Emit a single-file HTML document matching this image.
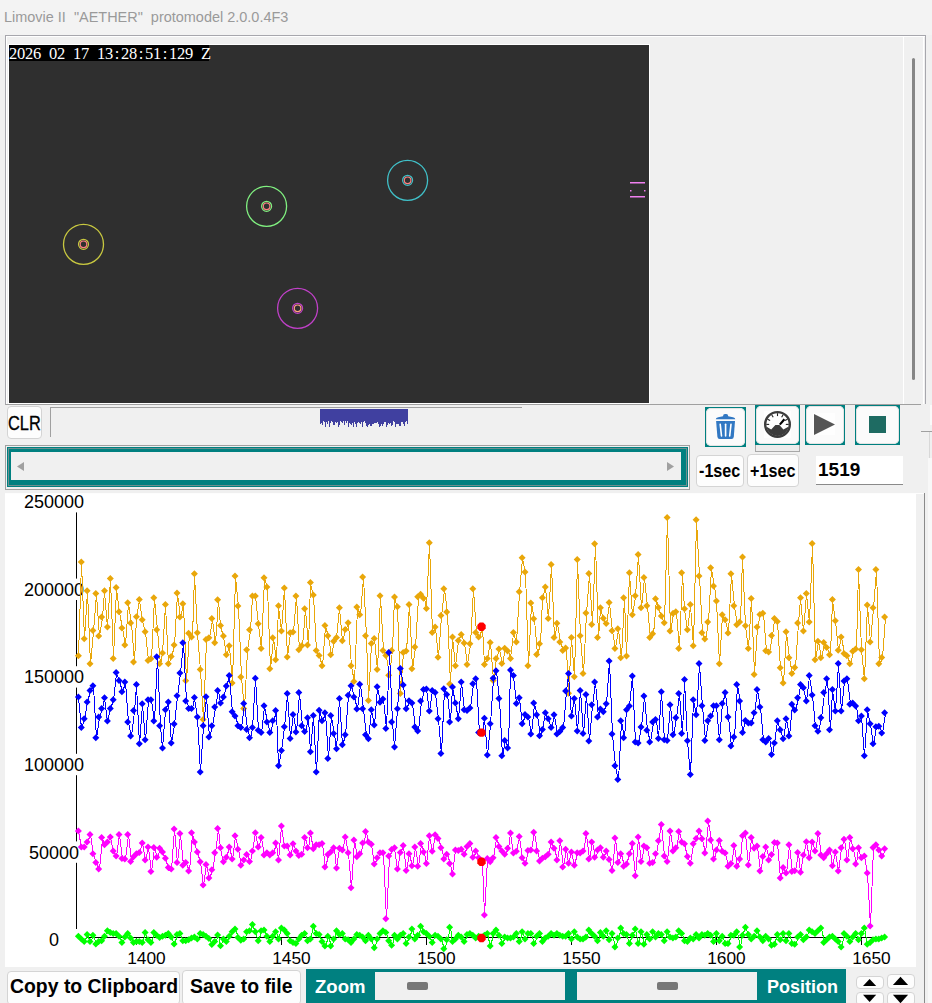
<!DOCTYPE html><html><head><meta charset="utf-8"><style>
*{margin:0;padding:0;box-sizing:border-box}
html,body{width:932px;height:1003px;overflow:hidden;background:#f0f0f0;font-family:"Liberation Sans",sans-serif;position:relative}
.a{position:absolute}
.title{left:0;top:0;width:932px;height:35px;background:#f3f3f3}
.ttext{left:4px;top:8px;font-size:15px;color:#9a9a9a;white-space:pre;transform:scaleX(0.964);transform-origin:0 0}
.btn{background:#fdfdfd;border:1px solid #d4d4d4;border-radius:4px}
.tbtn{background:#008080}
.tbtn>div{position:absolute;left:1px;top:1px;right:1px;bottom:1px;background:#fbfbfb;border-radius:5px;box-shadow:inset 0 0 0 1px #e4e4e4}
.bold{font-weight:bold;color:#000;white-space:pre}
</style></head><body><div class="a title"></div>
<div class="a ttext">Limovie II  "AETHER"  protomodel 2.0.0.4F3</div>
<div class="a" style="left:5px;top:35px;width:921px;height:370px;border:1px solid #a7a7ad;border-bottom-color:#a0a0a0"></div>
<div class="a" style="left:6px;top:36px;width:919px;height:1px;background:#fff"></div>
<div class="a" style="left:6px;top:36px;width:1px;height:368px;background:#fff"></div>
<div class="a" style="left:923px;top:36px;width:1px;height:368px;background:#fff"></div>
<div class="a" style="left:903px;top:37px;width:1px;height:367px;background:#fff"></div>
<div class="a" style="left:912px;top:58px;width:3px;height:322px;background:#868686;border-radius:2px"></div>
<div class="a" style="left:8px;top:44px;width:642px;height:360px;background:#fff"></div>
<div class="a" style="left:9px;top:45px;width:640px;height:358px;background:#2f2f2f"></div>
<div class="a" style="left:9px;top:45px;width:200px;height:16px;background:#000"></div>
<div class="a" style="left:9px;top:46px;height:16px;font-family:'Liberation Serif',serif;font-size:16.5px;line-height:16px;color:#fff;white-space:pre;display:flex"><span style="display:inline-block;width:8px;text-align:center">2</span><span style="display:inline-block;width:8px;text-align:center">0</span><span style="display:inline-block;width:8px;text-align:center">2</span><span style="display:inline-block;width:8px;text-align:center">6</span><span style="display:inline-block;width:8px;text-align:center"> </span><span style="display:inline-block;width:8px;text-align:center">0</span><span style="display:inline-block;width:8px;text-align:center">2</span><span style="display:inline-block;width:8px;text-align:center"> </span><span style="display:inline-block;width:8px;text-align:center">1</span><span style="display:inline-block;width:8px;text-align:center">7</span><span style="display:inline-block;width:8px;text-align:center"> </span><span style="display:inline-block;width:8px;text-align:center">1</span><span style="display:inline-block;width:8px;text-align:center">3</span><span style="display:inline-block;width:8px;text-align:center">:</span><span style="display:inline-block;width:8px;text-align:center">2</span><span style="display:inline-block;width:8px;text-align:center">8</span><span style="display:inline-block;width:8px;text-align:center">:</span><span style="display:inline-block;width:8px;text-align:center">5</span><span style="display:inline-block;width:8px;text-align:center">1</span><span style="display:inline-block;width:8px;text-align:center">:</span><span style="display:inline-block;width:8px;text-align:center">1</span><span style="display:inline-block;width:8px;text-align:center">2</span><span style="display:inline-block;width:8px;text-align:center">9</span><span style="display:inline-block;width:8px;text-align:center"> </span><span style="display:inline-block;width:8px;text-align:center">Z</span></div>
<svg class="a" style="left:0;top:0" width="932" height="410"><circle cx="83.5" cy="244.3" r="20" fill="none" stroke="#c8c840" stroke-width="1.3"/><circle cx="83.5" cy="244.3" r="5" fill="none" stroke="#c8c840" stroke-width="1.2"/><circle cx="83.5" cy="244.3" r="3.3" fill="none" stroke="#ff8080" stroke-width="1.2"/><circle cx="266.6" cy="206.3" r="20" fill="none" stroke="#80f080" stroke-width="1.3"/><circle cx="266.6" cy="206.3" r="5" fill="none" stroke="#80f080" stroke-width="1.2"/><circle cx="266.6" cy="206.3" r="3.3" fill="none" stroke="#ff8080" stroke-width="1.2"/><circle cx="407.6" cy="180.3" r="20" fill="none" stroke="#40c0c8" stroke-width="1.3"/><circle cx="407.6" cy="180.3" r="5" fill="none" stroke="#40c0c8" stroke-width="1.2"/><circle cx="407.6" cy="180.3" r="3.3" fill="none" stroke="#ff8080" stroke-width="1.2"/><circle cx="297.6" cy="308.3" r="20" fill="none" stroke="#c040c8" stroke-width="1.3"/><circle cx="297.6" cy="308.3" r="5" fill="none" stroke="#c040c8" stroke-width="1.2"/><circle cx="297.6" cy="308.3" r="3.3" fill="none" stroke="#ffa080" stroke-width="1.2"/><rect x="630" y="182" width="15" height="1.5" fill="#f080f0"/><rect x="630" y="196" width="15" height="1.5" fill="#f080f0"/><rect x="630" y="190" width="1.5" height="1.5" fill="#f080f0"/><rect x="644" y="190" width="1.5" height="1.5" fill="#f080f0"/></svg>
<div class="a" style="left:921px;top:404px;width:11px;height:28px;background:#f0f0f0;border-bottom:1px solid #a0a0a0"></div>
<div class="a" style="left:930px;top:405px;width:2px;height:20px;background:#fafafa"></div>
<div class="a" style="left:929px;top:432px;width:1px;height:26px;background:#d8d8d8"></div>
<div class="a btn" style="left:6.5px;top:406px;width:35.5px;height:33px"></div>
<div class="a" style="left:8px;top:412px;font-size:19.5px;line-height:22px;color:#000;-webkit-text-stroke:0.3px #000;transform:scaleX(0.84);transform-origin:0 0">CLR</div>
<div class="a" style="left:50px;top:407px;width:1px;height:30px;background:#a0a0a0"></div>
<div class="a" style="left:50px;top:407px;width:472px;height:1px;background:#a0a0a0"></div>
<div class="a" style="left:320px;top:409px;width:88px;height:11px;background:#4040a0"></div>
<svg class="a" style="left:0;top:0" width="932" height="440"><rect x="320" y="420" width="1" height="4" fill="#4040a0"/><rect x="321" y="420" width="1" height="3" fill="#4040a0"/><rect x="322" y="420" width="1" height="5" fill="#4040a0"/><rect x="323" y="420" width="1" height="1" fill="#4040a0"/><rect x="324" y="420" width="1" height="2" fill="#4040a0"/><rect x="325" y="420" width="1" height="7" fill="#4040a0"/><rect x="326" y="420" width="1" height="2" fill="#4040a0"/><rect x="327" y="420" width="1" height="4" fill="#4040a0"/><rect x="328" y="420" width="1" height="1" fill="#4040a0"/><rect x="329" y="420" width="1" height="7" fill="#4040a0"/><rect x="330" y="420" width="1" height="3" fill="#4040a0"/><rect x="331" y="420" width="1" height="1" fill="#4040a0"/><rect x="332" y="420" width="1" height="2" fill="#4040a0"/><rect x="333" y="420" width="1" height="5" fill="#4040a0"/><rect x="334" y="420" width="1" height="5" fill="#4040a0"/><rect x="335" y="420" width="1" height="2" fill="#4040a0"/><rect x="336" y="420" width="1" height="3" fill="#4040a0"/><rect x="337" y="420" width="1" height="2" fill="#4040a0"/><rect x="338" y="420" width="1" height="7" fill="#4040a0"/><rect x="339" y="420" width="1" height="5" fill="#4040a0"/><rect x="340" y="420" width="1" height="1" fill="#4040a0"/><rect x="341" y="420" width="1" height="2" fill="#4040a0"/><rect x="342" y="420" width="1" height="3" fill="#4040a0"/><rect x="343" y="420" width="1" height="1" fill="#4040a0"/><rect x="344" y="420" width="1" height="5" fill="#4040a0"/><rect x="345" y="420" width="1" height="1" fill="#4040a0"/><rect x="346" y="420" width="1" height="3" fill="#4040a0"/><rect x="347" y="420" width="1" height="1" fill="#4040a0"/><rect x="348" y="420" width="1" height="7" fill="#4040a0"/><rect x="349" y="420" width="1" height="3" fill="#4040a0"/><rect x="350" y="420" width="1" height="4" fill="#4040a0"/><rect x="351" y="420" width="1" height="5" fill="#4040a0"/><rect x="352" y="420" width="1" height="3" fill="#4040a0"/><rect x="353" y="420" width="1" height="7" fill="#4040a0"/><rect x="354" y="420" width="1" height="2" fill="#4040a0"/><rect x="355" y="420" width="1" height="4" fill="#4040a0"/><rect x="356" y="420" width="1" height="7" fill="#4040a0"/><rect x="357" y="420" width="1" height="3" fill="#4040a0"/><rect x="358" y="420" width="1" height="2" fill="#4040a0"/><rect x="359" y="420" width="1" height="3" fill="#4040a0"/><rect x="360" y="420" width="1" height="4" fill="#4040a0"/><rect x="361" y="420" width="1" height="2" fill="#4040a0"/><rect x="362" y="420" width="1" height="7" fill="#4040a0"/><rect x="363" y="420" width="1" height="2" fill="#4040a0"/><rect x="364" y="420" width="1" height="1" fill="#4040a0"/><rect x="365" y="420" width="1" height="3" fill="#4040a0"/><rect x="366" y="420" width="1" height="6" fill="#4040a0"/><rect x="367" y="420" width="1" height="7" fill="#4040a0"/><rect x="368" y="420" width="1" height="5" fill="#4040a0"/><rect x="369" y="420" width="1" height="4" fill="#4040a0"/><rect x="370" y="420" width="1" height="6" fill="#4040a0"/><rect x="371" y="420" width="1" height="6" fill="#4040a0"/><rect x="372" y="420" width="1" height="4" fill="#4040a0"/><rect x="373" y="420" width="1" height="4" fill="#4040a0"/><rect x="374" y="420" width="1" height="3" fill="#4040a0"/><rect x="375" y="420" width="1" height="3" fill="#4040a0"/><rect x="376" y="420" width="1" height="3" fill="#4040a0"/><rect x="377" y="420" width="1" height="2" fill="#4040a0"/><rect x="378" y="420" width="1" height="4" fill="#4040a0"/><rect x="379" y="420" width="1" height="7" fill="#4040a0"/><rect x="380" y="420" width="1" height="6" fill="#4040a0"/><rect x="381" y="420" width="1" height="4" fill="#4040a0"/><rect x="382" y="420" width="1" height="6" fill="#4040a0"/><rect x="383" y="420" width="1" height="4" fill="#4040a0"/><rect x="384" y="420" width="1" height="2" fill="#4040a0"/><rect x="385" y="420" width="1" height="2" fill="#4040a0"/><rect x="386" y="420" width="1" height="7" fill="#4040a0"/><rect x="387" y="420" width="1" height="5" fill="#4040a0"/><rect x="388" y="420" width="1" height="3" fill="#4040a0"/><rect x="389" y="420" width="1" height="4" fill="#4040a0"/><rect x="390" y="420" width="1" height="3" fill="#4040a0"/><rect x="391" y="420" width="1" height="6" fill="#4040a0"/><rect x="392" y="420" width="1" height="5" fill="#4040a0"/><rect x="393" y="420" width="1" height="1" fill="#4040a0"/><rect x="394" y="420" width="1" height="2" fill="#4040a0"/><rect x="395" y="420" width="1" height="7" fill="#4040a0"/><rect x="396" y="420" width="1" height="4" fill="#4040a0"/><rect x="397" y="420" width="1" height="4" fill="#4040a0"/><rect x="398" y="420" width="1" height="4" fill="#4040a0"/><rect x="399" y="420" width="1" height="6" fill="#4040a0"/><rect x="400" y="420" width="1" height="6" fill="#4040a0"/><rect x="401" y="420" width="1" height="2" fill="#4040a0"/><rect x="402" y="420" width="1" height="2" fill="#4040a0"/><rect x="403" y="420" width="1" height="4" fill="#4040a0"/><rect x="404" y="420" width="1" height="6" fill="#4040a0"/><rect x="405" y="420" width="1" height="2" fill="#4040a0"/><rect x="406" y="420" width="1" height="1" fill="#4040a0"/><rect x="407" y="420" width="1" height="4" fill="#4040a0"/></svg>
<div class="a tbtn" style="left:705px;top:407px;width:41px;height:40px"><div></div></div>
<div class="a tbtn" style="left:755px;top:405px;width:45px;height:40px"><div></div></div>
<div class="a tbtn" style="left:805px;top:405px;width:40px;height:40px"><div></div></div>
<div class="a tbtn" style="left:855px;top:405px;width:45px;height:40px"><div></div></div>
<div class="a" style="left:755px;top:445px;width:45px;height:7px;border:1px solid #a8a8a8;border-top:none;background:#ececec"></div>
<svg class="a" style="left:0;top:0" width="932" height="460"><path d="M723 416.3 Q723 414 725 414 L726.2 414 Q728.2 414 728.2 416.3 L733 417.3 Q735.3 417.8 735.3 419.2 L715.8 419.2 Q715.8 417.8 718.2 417.3 Z" fill="#3278c3"/><path d="M716.1 421 L735 421 L733.8 436.8 Q733.6 439 731.5 439 L719.6 439 Q717.6 439 717.4 436.8 Z" fill="#3278c3"/><line x1="720.2" y1="424.2" x2="721.5" y2="436" stroke="#fff" stroke-width="1.6" stroke-linecap="round"/><line x1="725.6" y1="424.2" x2="725.6" y2="436" stroke="#fff" stroke-width="1.6" stroke-linecap="round"/><line x1="731.0" y1="424.2" x2="729.7" y2="436" stroke="#fff" stroke-width="1.6" stroke-linecap="round"/><rect x="764" y="411" width="27" height="27" fill="#fff"/><circle cx="777.5" cy="424.4" r="12.3" fill="#fff" stroke="#3c3c3c" stroke-width="2.4"/><path d="M766.2 426.6 L771.2 429.6 L775.4 425.1 L779.4 425.1 L783.4 429.6 L788.8 426.6 A11.5 11.5 0 0 1 766.2 426.6 Z" fill="#3c3c3c"/><path d="M766.3 426 A 11.4 11.4 0 1 1 788.7 426" fill="none" stroke="#3c3c3c" stroke-width="0"/><line x1="779.8" y1="424.6" x2="784.4" y2="419.3" stroke="#000" stroke-width="2.2"/><line x1="766.3" y1="424.4" x2="769.2" y2="424.4" stroke="#222" stroke-width="1.1"/><line x1="767.5" y1="419.3" x2="770.1" y2="420.6" stroke="#222" stroke-width="1.1"/><line x1="771.7" y1="414.8" x2="773.2" y2="417.3" stroke="#222" stroke-width="1.1"/><line x1="777.5" y1="413.2" x2="777.5" y2="416.1" stroke="#222" stroke-width="1.1"/><line x1="783.1" y1="414.7" x2="781.6" y2="417.2" stroke="#222" stroke-width="1.1"/><line x1="787.5" y1="419.3" x2="784.9" y2="420.6" stroke="#222" stroke-width="1.1"/><line x1="788.7" y1="424.4" x2="785.8" y2="424.4" stroke="#222" stroke-width="1.1"/><rect x="813" y="413" width="22" height="22" fill="#fefefe"/><path d="M814 414 L835 424.5 L814 435 Z" fill="#555"/><rect x="869" y="416" width="17" height="17" fill="#1e6b62"/></svg>
<div class="a" style="left:5px;top:445px;width:685px;height:45px;border:1px solid #a0a0a0;background:#f0f0f0"></div>
<div class="a" style="left:7px;top:447px;width:681px;height:40px;background:#008080"></div>
<div class="a" style="left:8px;top:448px;width:679px;height:38px;border:1px solid #6f8f8f"></div>
<div class="a" style="left:11px;top:452px;width:670px;height:28px;background:#f0f0f0"></div>
<svg class="a" style="left:0;top:0" width="700" height="490"><path d="M17 466.5 L24 462 L24 471 Z" fill="#a0a0a0"/><path d="M674 466.5 L667 462 L667 471 Z" fill="#a0a0a0"/></svg>
<div class="a btn" style="left:696px;top:455px;width:48px;height:32px"></div>
<div class="a btn" style="left:747px;top:454px;width:52px;height:33px"></div>
<div class="a bold" style="left:699px;top:459px;font-size:19px;line-height:24px;transform:scaleX(0.85);transform-origin:0 0">-1sec</div>
<div class="a bold" style="left:750px;top:459px;font-size:19px;line-height:24px;transform:scaleX(0.85);transform-origin:0 0">+1sec</div>
<div class="a" style="left:816px;top:456px;width:87px;height:29px;background:#fff;border-bottom:1px solid #8a8a8a"></div>
<div class="a bold" style="left:818px;top:458px;font-size:19px;line-height:24px">1519</div>
<div class="a" style="left:5px;top:494px;width:911px;height:473px;background:#fff"></div>
<div class="a" style="left:5px;top:493px;width:919px;height:1px;background:#fdfdfd"></div>
<div class="a" style="left:924px;top:493px;width:1px;height:510px;background:#8a8a8a"></div>
<div class="a" style="left:928px;top:458px;width:4px;height:545px;background:#f8f8f8"></div>
<svg class="a" style="left:0;top:0" width="932" height="970"><g font-family="Liberation Sans"><line x1="76.5" y1="512" x2="76.5" y2="938" stroke="#000" stroke-width="1"/><line x1="68" y1="937.5" x2="879" y2="937.5" stroke="#000" stroke-width="1"/><line x1="136.5" y1="938" x2="136.5" y2="945" stroke="#000" stroke-width="1"/><text x="146.4" y="963.5" text-anchor="middle" font-size="17.3" fill="#000">1400</text><line x1="281.5" y1="938" x2="281.5" y2="945" stroke="#000" stroke-width="1"/><text x="291.4" y="963.5" text-anchor="middle" font-size="17.3" fill="#000">1450</text><line x1="426.5" y1="938" x2="426.5" y2="945" stroke="#000" stroke-width="1"/><text x="436.4" y="963.5" text-anchor="middle" font-size="17.3" fill="#000">1500</text><line x1="571.5" y1="938" x2="571.5" y2="945" stroke="#000" stroke-width="1"/><text x="581.4" y="963.5" text-anchor="middle" font-size="17.3" fill="#000">1550</text><line x1="716.5" y1="938" x2="716.5" y2="945" stroke="#000" stroke-width="1"/><text x="726.4" y="963.5" text-anchor="middle" font-size="17.3" fill="#000">1600</text><line x1="861.5" y1="938" x2="861.5" y2="945" stroke="#000" stroke-width="1"/><text x="871.4" y="963.5" text-anchor="middle" font-size="17.3" fill="#000">1650</text><rect x="20" y="929.0" width="66" height="21.4" fill="#fff"/><text x="54" y="946.1" text-anchor="middle" font-size="18" fill="#000">0</text><rect x="20" y="841.4" width="66" height="21.4" fill="#fff"/><text x="54" y="858.5" text-anchor="middle" font-size="18" fill="#000">50000</text><rect x="20" y="753.8" width="66" height="21.4" fill="#fff"/><text x="54" y="770.9" text-anchor="middle" font-size="18" fill="#000">100000</text><rect x="20" y="666.2" width="66" height="21.4" fill="#fff"/><text x="54" y="683.3" text-anchor="middle" font-size="18" fill="#000">150000</text><rect x="20" y="578.6" width="66" height="21.4" fill="#fff"/><text x="54" y="595.7" text-anchor="middle" font-size="18" fill="#000">200000</text><rect x="20" y="494.0" width="66" height="18.4" fill="#fff"/><text x="54" y="508.1" text-anchor="middle" font-size="18" fill="#000">250000</text><polyline points="78.5,656.5 81.5,562.5 84.5,639.5 87.5,591.5 90.5,664.5 93.5,631.5 96.5,594.5 99.5,636.5 102.5,617.5 104.5,591.5 107.5,627.5 110.5,579.5 113.5,658.5 116.5,588.5 119.5,612.5 122.5,628.5 125.5,645.5 128.5,603.5 131.5,623.5 134.5,662.5 136.5,617.5 139.5,600.5 142.5,620.5 145.5,632.5 148.5,660.5 151.5,659.5 154.5,598.5 157.5,630.5 160.5,664.5 162.5,653.5 165.5,605.5 168.5,664.5 171.5,657.5 174.5,645.5 177.5,593.5 180.5,617.5 183.5,604.5 186.5,681.5 189.5,633.5 192.5,637.5 194.5,574.5 197.5,633.5 200.5,670.5 203.5,720.5 206.5,640.5 209.5,638.5 212.5,619.5 215.5,643.5 218.5,600.5 220.5,626.5 223.5,636.5 226.5,655.5 229.5,646.5 232.5,683.5 235.5,576.5 238.5,606.5 241.5,677.5 244.5,709.5 247.5,650.5 250.5,630.5 252.5,596.5 255.5,596.5 258.5,624.5 261.5,648.5 264.5,578.5 267.5,587.5 270.5,669.5 273.5,638.5 276.5,660.5 278.5,606.5 281.5,631.5 284.5,588.5 287.5,657.5 290.5,633.5 293.5,632.5 296.5,596.5 299.5,650.5 302.5,646.5 305.5,609.5 308.5,645.5 310.5,583.5 313.5,595.5 316.5,650.5 319.5,656.5 322.5,666.5 325.5,626.5 328.5,636.5 331.5,655.5 334.5,641.5 336.5,638.5 339.5,608.5 342.5,641.5 345.5,630.5 348.5,623.5 351.5,666.5 354.5,682.5 357.5,607.5 360.5,615.5 363.5,577.5 366.5,636.5 368.5,700.5 371.5,643.5 374.5,638.5 377.5,670.5 380.5,596.5 383.5,650.5 386.5,656.5 389.5,675.5 392.5,650.5 394.5,597.5 397.5,607.5 400.5,694.5 403.5,652.5 406.5,651.5 409.5,604.5 412.5,669.5 415.5,647.5 418.5,597.5 421.5,594.5 424.5,598.5 426.5,608.5 429.5,543.5 432.5,633.5 435.5,627.5 438.5,657.5 441.5,616.5 444.5,589.5 447.5,612.5 450.5,684.5 452.5,637.5 455.5,666.5 458.5,640.5 461.5,634.5 464.5,643.5 467.5,664.5 470.5,644.5 473.5,589.5 476.5,633.5 479.5,637.5 482.5,627.5 484.5,664.5 487.5,658.5 490.5,642.5 493.5,680.5 496.5,658.5 499.5,649.5 502.5,664.5 505.5,648.5 508.5,651.5 510.5,658.5 513.5,633.5 516.5,642.5 519.5,592.5 522.5,558.5 525.5,572.5 528.5,666.5 531.5,603.5 534.5,619.5 537.5,654.5 540.5,644.5 542.5,598.5 545.5,587.5 548.5,618.5 551.5,565.5 554.5,638.5 557.5,623.5 560.5,642.5 563.5,650.5 566.5,648.5 568.5,693.5 571.5,638.5 574.5,677.5 577.5,560.5 580.5,636.5 583.5,674.5 586.5,613.5 589.5,574.5 592.5,624.5 595.5,544.5 598.5,638.5 600.5,608.5 603.5,618.5 606.5,624.5 609.5,603.5 612.5,631.5 615.5,648.5 618.5,629.5 621.5,658.5 624.5,598.5 626.5,656.5 629.5,573.5 632.5,615.5 635.5,596.5 638.5,555.5 641.5,608.5 644.5,578.5 647.5,606.5 650.5,638.5 653.5,634.5 656.5,599.5 658.5,608.5 661.5,616.5 664.5,623.5 667.5,518.5 670.5,631.5 673.5,614.5 676.5,612.5 679.5,648.5 682.5,573.5 684.5,609.5 687.5,630.5 690.5,605.5 693.5,646.5 696.5,520.5 699.5,576.5 702.5,633.5 705.5,639.5 708.5,622.5 711.5,568.5 714.5,586.5 716.5,601.5 719.5,664.5 722.5,615.5 725.5,620.5 728.5,633.5 731.5,574.5 734.5,606.5 737.5,625.5 740.5,622.5 742.5,557.5 745.5,626.5 748.5,648.5 751.5,599.5 754.5,674.5 757.5,627.5 760.5,614.5 763.5,613.5 766.5,651.5 769.5,652.5 772.5,636.5 774.5,619.5 777.5,622.5 780.5,668.5 783.5,683.5 786.5,632.5 789.5,658.5 792.5,674.5 795.5,667.5 798.5,623.5 800.5,598.5 803.5,631.5 806.5,594.5 809.5,622.5 812.5,544.5 815.5,660.5 818.5,641.5 821.5,658.5 824.5,643.5 827.5,648.5 830.5,655.5 832.5,600.5 835.5,621.5 838.5,650.5 841.5,637.5 844.5,653.5 847.5,656.5 850.5,664.5 853.5,651.5 856.5,649.5 858.5,570.5 861.5,650.5 864.5,679.5 867.5,605.5 870.5,642.5 873.5,608.5 876.5,570.5 879.5,664.5 882.5,658.5 885.5,617.5" fill="none" stroke="#e9a70a" stroke-width="1" shape-rendering="crispEdges"/><path d="M78.4 652.2l3.5 3.5l-3.5 3.5l-3.5 -3.5zM81.3 558.4l3.5 3.5l-3.5 3.5l-3.5 -3.5zM84.2 635.2l3.5 3.5l-3.5 3.5l-3.5 -3.5zM87.1 587.3l3.5 3.5l-3.5 3.5l-3.5 -3.5zM90.0 660.3l3.5 3.5l-3.5 3.5l-3.5 -3.5zM92.9 627.1l3.5 3.5l-3.5 3.5l-3.5 -3.5zM95.8 590.0l3.5 3.5l-3.5 3.5l-3.5 -3.5zM98.7 632.5l3.5 3.5l-3.5 3.5l-3.5 -3.5zM101.6 613.5l3.5 3.5l-3.5 3.5l-3.5 -3.5zM104.5 587.3l3.5 3.5l-3.5 3.5l-3.5 -3.5zM107.4 623.5l3.5 3.5l-3.5 3.5l-3.5 -3.5zM110.3 575.1l3.5 3.5l-3.5 3.5l-3.5 -3.5zM113.2 654.9l3.5 3.5l-3.5 3.5l-3.5 -3.5zM116.1 584.0l3.5 3.5l-3.5 3.5l-3.5 -3.5zM119.0 608.2l3.5 3.5l-3.5 3.5l-3.5 -3.5zM121.9 624.5l3.5 3.5l-3.5 3.5l-3.5 -3.5zM124.8 641.5l3.5 3.5l-3.5 3.5l-3.5 -3.5zM127.7 599.3l3.5 3.5l-3.5 3.5l-3.5 -3.5zM130.6 619.4l3.5 3.5l-3.5 3.5l-3.5 -3.5zM133.5 658.5l3.5 3.5l-3.5 3.5l-3.5 -3.5zM136.4 613.3l3.5 3.5l-3.5 3.5l-3.5 -3.5zM139.3 596.1l3.5 3.5l-3.5 3.5l-3.5 -3.5zM142.2 616.3l3.5 3.5l-3.5 3.5l-3.5 -3.5zM145.1 628.3l3.5 3.5l-3.5 3.5l-3.5 -3.5zM148.0 657.0l3.5 3.5l-3.5 3.5l-3.5 -3.5zM150.9 655.2l3.5 3.5l-3.5 3.5l-3.5 -3.5zM153.8 594.3l3.5 3.5l-3.5 3.5l-3.5 -3.5zM156.7 626.2l3.5 3.5l-3.5 3.5l-3.5 -3.5zM159.6 660.3l3.5 3.5l-3.5 3.5l-3.5 -3.5zM162.5 649.5l3.5 3.5l-3.5 3.5l-3.5 -3.5zM165.4 601.1l3.5 3.5l-3.5 3.5l-3.5 -3.5zM168.3 660.3l3.5 3.5l-3.5 3.5l-3.5 -3.5zM171.2 653.1l3.5 3.5l-3.5 3.5l-3.5 -3.5zM174.1 641.5l3.5 3.5l-3.5 3.5l-3.5 -3.5zM177.0 589.4l3.5 3.5l-3.5 3.5l-3.5 -3.5zM179.9 613.5l3.5 3.5l-3.5 3.5l-3.5 -3.5zM182.8 600.2l3.5 3.5l-3.5 3.5l-3.5 -3.5zM185.7 677.3l3.5 3.5l-3.5 3.5l-3.5 -3.5zM188.6 629.8l3.5 3.5l-3.5 3.5l-3.5 -3.5zM191.5 633.4l3.5 3.5l-3.5 3.5l-3.5 -3.5zM194.4 570.2l3.5 3.5l-3.5 3.5l-3.5 -3.5zM197.3 629.2l3.5 3.5l-3.5 3.5l-3.5 -3.5zM200.2 666.0l3.5 3.5l-3.5 3.5l-3.5 -3.5zM203.1 716.1l3.5 3.5l-3.5 3.5l-3.5 -3.5zM206.0 636.1l3.5 3.5l-3.5 3.5l-3.5 -3.5zM208.9 634.3l3.5 3.5l-3.5 3.5l-3.5 -3.5zM211.8 615.1l3.5 3.5l-3.5 3.5l-3.5 -3.5zM214.7 639.3l3.5 3.5l-3.5 3.5l-3.5 -3.5zM217.6 596.2l3.5 3.5l-3.5 3.5l-3.5 -3.5zM220.5 622.1l3.5 3.5l-3.5 3.5l-3.5 -3.5zM223.4 632.5l3.5 3.5l-3.5 3.5l-3.5 -3.5zM226.3 651.3l3.5 3.5l-3.5 3.5l-3.5 -3.5zM229.2 642.3l3.5 3.5l-3.5 3.5l-3.5 -3.5zM232.1 679.5l3.5 3.5l-3.5 3.5l-3.5 -3.5zM235.0 572.4l3.5 3.5l-3.5 3.5l-3.5 -3.5zM237.9 602.5l3.5 3.5l-3.5 3.5l-3.5 -3.5zM240.8 673.4l3.5 3.5l-3.5 3.5l-3.5 -3.5zM243.7 705.1l3.5 3.5l-3.5 3.5l-3.5 -3.5zM246.6 646.3l3.5 3.5l-3.5 3.5l-3.5 -3.5zM249.5 626.2l3.5 3.5l-3.5 3.5l-3.5 -3.5zM252.4 592.5l3.5 3.5l-3.5 3.5l-3.5 -3.5zM255.3 592.5l3.5 3.5l-3.5 3.5l-3.5 -3.5zM258.2 620.3l3.5 3.5l-3.5 3.5l-3.5 -3.5zM261.1 645.0l3.5 3.5l-3.5 3.5l-3.5 -3.5zM264.0 574.2l3.5 3.5l-3.5 3.5l-3.5 -3.5zM266.9 583.5l3.5 3.5l-3.5 3.5l-3.5 -3.5zM269.8 665.3l3.5 3.5l-3.5 3.5l-3.5 -3.5zM272.7 634.3l3.5 3.5l-3.5 3.5l-3.5 -3.5zM275.6 656.3l3.5 3.5l-3.5 3.5l-3.5 -3.5zM278.5 602.3l3.5 3.5l-3.5 3.5l-3.5 -3.5zM281.4 627.5l3.5 3.5l-3.5 3.5l-3.5 -3.5zM284.3 584.4l3.5 3.5l-3.5 3.5l-3.5 -3.5zM287.2 653.5l3.5 3.5l-3.5 3.5l-3.5 -3.5zM290.1 629.2l3.5 3.5l-3.5 3.5l-3.5 -3.5zM293.0 628.5l3.5 3.5l-3.5 3.5l-3.5 -3.5zM295.9 592.5l3.5 3.5l-3.5 3.5l-3.5 -3.5zM298.8 646.3l3.5 3.5l-3.5 3.5l-3.5 -3.5zM301.7 642.3l3.5 3.5l-3.5 3.5l-3.5 -3.5zM304.6 605.2l3.5 3.5l-3.5 3.5l-3.5 -3.5zM307.5 641.5l3.5 3.5l-3.5 3.5l-3.5 -3.5zM310.4 579.1l3.5 3.5l-3.5 3.5l-3.5 -3.5zM313.3 591.4l3.5 3.5l-3.5 3.5l-3.5 -3.5zM316.2 647.0l3.5 3.5l-3.5 3.5l-3.5 -3.5zM319.1 652.1l3.5 3.5l-3.5 3.5l-3.5 -3.5zM322.0 662.3l3.5 3.5l-3.5 3.5l-3.5 -3.5zM324.9 622.1l3.5 3.5l-3.5 3.5l-3.5 -3.5zM327.8 632.3l3.5 3.5l-3.5 3.5l-3.5 -3.5zM330.7 651.2l3.5 3.5l-3.5 3.5l-3.5 -3.5zM333.6 637.7l3.5 3.5l-3.5 3.5l-3.5 -3.5zM336.5 634.1l3.5 3.5l-3.5 3.5l-3.5 -3.5zM339.4 604.2l3.5 3.5l-3.5 3.5l-3.5 -3.5zM342.3 637.2l3.5 3.5l-3.5 3.5l-3.5 -3.5zM345.2 626.1l3.5 3.5l-3.5 3.5l-3.5 -3.5zM348.1 619.2l3.5 3.5l-3.5 3.5l-3.5 -3.5zM351.0 662.3l3.5 3.5l-3.5 3.5l-3.5 -3.5zM353.9 678.1l3.5 3.5l-3.5 3.5l-3.5 -3.5zM356.8 603.6l3.5 3.5l-3.5 3.5l-3.5 -3.5zM359.7 611.3l3.5 3.5l-3.5 3.5l-3.5 -3.5zM362.6 573.5l3.5 3.5l-3.5 3.5l-3.5 -3.5zM365.5 632.3l3.5 3.5l-3.5 3.5l-3.5 -3.5zM368.4 696.9l3.5 3.5l-3.5 3.5l-3.5 -3.5zM371.3 639.9l3.5 3.5l-3.5 3.5l-3.5 -3.5zM374.2 635.0l3.5 3.5l-3.5 3.5l-3.5 -3.5zM377.1 666.1l3.5 3.5l-3.5 3.5l-3.5 -3.5zM380.0 592.3l3.5 3.5l-3.5 3.5l-3.5 -3.5zM382.9 647.0l3.5 3.5l-3.5 3.5l-3.5 -3.5zM385.8 652.1l3.5 3.5l-3.5 3.5l-3.5 -3.5zM388.7 671.8l3.5 3.5l-3.5 3.5l-3.5 -3.5zM391.6 647.0l3.5 3.5l-3.5 3.5l-3.5 -3.5zM394.5 593.4l3.5 3.5l-3.5 3.5l-3.5 -3.5zM397.4 603.3l3.5 3.5l-3.5 3.5l-3.5 -3.5zM400.3 690.1l3.5 3.5l-3.5 3.5l-3.5 -3.5zM403.2 649.0l3.5 3.5l-3.5 3.5l-3.5 -3.5zM406.1 647.6l3.5 3.5l-3.5 3.5l-3.5 -3.5zM409.0 600.9l3.5 3.5l-3.5 3.5l-3.5 -3.5zM411.9 665.2l3.5 3.5l-3.5 3.5l-3.5 -3.5zM414.8 643.5l3.5 3.5l-3.5 3.5l-3.5 -3.5zM417.7 593.2l3.5 3.5l-3.5 3.5l-3.5 -3.5zM420.6 590.7l3.5 3.5l-3.5 3.5l-3.5 -3.5zM423.5 594.7l3.5 3.5l-3.5 3.5l-3.5 -3.5zM426.4 604.9l3.5 3.5l-3.5 3.5l-3.5 -3.5zM429.3 539.3l3.5 3.5l-3.5 3.5l-3.5 -3.5zM432.2 629.1l3.5 3.5l-3.5 3.5l-3.5 -3.5zM435.1 623.6l3.5 3.5l-3.5 3.5l-3.5 -3.5zM438.0 653.7l3.5 3.5l-3.5 3.5l-3.5 -3.5zM440.9 612.1l3.5 3.5l-3.5 3.5l-3.5 -3.5zM443.8 585.2l3.5 3.5l-3.5 3.5l-3.5 -3.5zM446.7 608.5l3.5 3.5l-3.5 3.5l-3.5 -3.5zM449.6 680.6l3.5 3.5l-3.5 3.5l-3.5 -3.5zM452.5 633.5l3.5 3.5l-3.5 3.5l-3.5 -3.5zM455.4 662.2l3.5 3.5l-3.5 3.5l-3.5 -3.5zM458.3 637.0l3.5 3.5l-3.5 3.5l-3.5 -3.5zM461.2 630.9l3.5 3.5l-3.5 3.5l-3.5 -3.5zM464.1 639.4l3.5 3.5l-3.5 3.5l-3.5 -3.5zM467.0 660.9l3.5 3.5l-3.5 3.5l-3.5 -3.5zM469.9 640.3l3.5 3.5l-3.5 3.5l-3.5 -3.5zM472.8 585.2l3.5 3.5l-3.5 3.5l-3.5 -3.5zM475.7 629.1l3.5 3.5l-3.5 3.5l-3.5 -3.5zM478.6 633.5l3.5 3.5l-3.5 3.5l-3.5 -3.5zM481.5 623.2l3.5 3.5l-3.5 3.5l-3.5 -3.5zM484.4 660.9l3.5 3.5l-3.5 3.5l-3.5 -3.5zM487.3 655.0l3.5 3.5l-3.5 3.5l-3.5 -3.5zM490.2 639.0l3.5 3.5l-3.5 3.5l-3.5 -3.5zM493.1 677.0l3.5 3.5l-3.5 3.5l-3.5 -3.5zM496.0 655.0l3.5 3.5l-3.5 3.5l-3.5 -3.5zM498.9 645.6l3.5 3.5l-3.5 3.5l-3.5 -3.5zM501.8 660.0l3.5 3.5l-3.5 3.5l-3.5 -3.5zM504.7 644.8l3.5 3.5l-3.5 3.5l-3.5 -3.5zM507.6 647.4l3.5 3.5l-3.5 3.5l-3.5 -3.5zM510.5 655.0l3.5 3.5l-3.5 3.5l-3.5 -3.5zM513.4 629.1l3.5 3.5l-3.5 3.5l-3.5 -3.5zM516.3 638.5l3.5 3.5l-3.5 3.5l-3.5 -3.5zM519.2 588.2l3.5 3.5l-3.5 3.5l-3.5 -3.5zM522.1 554.2l3.5 3.5l-3.5 3.5l-3.5 -3.5zM525.0 568.5l3.5 3.5l-3.5 3.5l-3.5 -3.5zM527.9 662.2l3.5 3.5l-3.5 3.5l-3.5 -3.5zM530.8 599.4l3.5 3.5l-3.5 3.5l-3.5 -3.5zM533.7 615.2l3.5 3.5l-3.5 3.5l-3.5 -3.5zM536.6 651.0l3.5 3.5l-3.5 3.5l-3.5 -3.5zM539.5 640.3l3.5 3.5l-3.5 3.5l-3.5 -3.5zM542.4 594.3l3.5 3.5l-3.5 3.5l-3.5 -3.5zM545.3 583.4l3.5 3.5l-3.5 3.5l-3.5 -3.5zM548.2 614.9l3.5 3.5l-3.5 3.5l-3.5 -3.5zM551.1 561.1l3.5 3.5l-3.5 3.5l-3.5 -3.5zM554.0 634.1l3.5 3.5l-3.5 3.5l-3.5 -3.5zM556.9 619.8l3.5 3.5l-3.5 3.5l-3.5 -3.5zM559.8 638.6l3.5 3.5l-3.5 3.5l-3.5 -3.5zM562.7 647.0l3.5 3.5l-3.5 3.5l-3.5 -3.5zM565.6 644.5l3.5 3.5l-3.5 3.5l-3.5 -3.5zM568.5 689.7l3.5 3.5l-3.5 3.5l-3.5 -3.5zM571.4 634.1l3.5 3.5l-3.5 3.5l-3.5 -3.5zM574.3 673.2l3.5 3.5l-3.5 3.5l-3.5 -3.5zM577.2 556.1l3.5 3.5l-3.5 3.5l-3.5 -3.5zM580.1 632.3l3.5 3.5l-3.5 3.5l-3.5 -3.5zM583.0 670.0l3.5 3.5l-3.5 3.5l-3.5 -3.5zM585.9 609.4l3.5 3.5l-3.5 3.5l-3.5 -3.5zM588.8 570.1l3.5 3.5l-3.5 3.5l-3.5 -3.5zM591.7 621.0l3.5 3.5l-3.5 3.5l-3.5 -3.5zM594.6 540.3l3.5 3.5l-3.5 3.5l-3.5 -3.5zM597.5 634.1l3.5 3.5l-3.5 3.5l-3.5 -3.5zM600.4 604.2l3.5 3.5l-3.5 3.5l-3.5 -3.5zM603.3 614.8l3.5 3.5l-3.5 3.5l-3.5 -3.5zM606.2 620.1l3.5 3.5l-3.5 3.5l-3.5 -3.5zM609.1 599.1l3.5 3.5l-3.5 3.5l-3.5 -3.5zM612.0 627.3l3.5 3.5l-3.5 3.5l-3.5 -3.5zM614.9 644.9l3.5 3.5l-3.5 3.5l-3.5 -3.5zM617.8 625.2l3.5 3.5l-3.5 3.5l-3.5 -3.5zM620.7 654.2l3.5 3.5l-3.5 3.5l-3.5 -3.5zM623.6 594.3l3.5 3.5l-3.5 3.5l-3.5 -3.5zM626.5 652.4l3.5 3.5l-3.5 3.5l-3.5 -3.5zM629.4 569.2l3.5 3.5l-3.5 3.5l-3.5 -3.5zM632.3 611.2l3.5 3.5l-3.5 3.5l-3.5 -3.5zM635.2 592.3l3.5 3.5l-3.5 3.5l-3.5 -3.5zM638.1 551.1l3.5 3.5l-3.5 3.5l-3.5 -3.5zM641.0 604.2l3.5 3.5l-3.5 3.5l-3.5 -3.5zM643.9 574.0l3.5 3.5l-3.5 3.5l-3.5 -3.5zM646.8 602.2l3.5 3.5l-3.5 3.5l-3.5 -3.5zM649.7 634.1l3.5 3.5l-3.5 3.5l-3.5 -3.5zM652.6 630.2l3.5 3.5l-3.5 3.5l-3.5 -3.5zM655.5 595.2l3.5 3.5l-3.5 3.5l-3.5 -3.5zM658.4 604.1l3.5 3.5l-3.5 3.5l-3.5 -3.5zM661.3 612.4l3.5 3.5l-3.5 3.5l-3.5 -3.5zM664.2 619.3l3.5 3.5l-3.5 3.5l-3.5 -3.5zM667.1 514.1l3.5 3.5l-3.5 3.5l-3.5 -3.5zM670.0 627.4l3.5 3.5l-3.5 3.5l-3.5 -3.5zM672.9 610.0l3.5 3.5l-3.5 3.5l-3.5 -3.5zM675.8 608.2l3.5 3.5l-3.5 3.5l-3.5 -3.5zM678.7 645.0l3.5 3.5l-3.5 3.5l-3.5 -3.5zM681.6 569.3l3.5 3.5l-3.5 3.5l-3.5 -3.5zM684.5 605.2l3.5 3.5l-3.5 3.5l-3.5 -3.5zM687.4 626.2l3.5 3.5l-3.5 3.5l-3.5 -3.5zM690.3 601.1l3.5 3.5l-3.5 3.5l-3.5 -3.5zM693.2 642.3l3.5 3.5l-3.5 3.5l-3.5 -3.5zM696.1 516.2l3.5 3.5l-3.5 3.5l-3.5 -3.5zM699.0 572.4l3.5 3.5l-3.5 3.5l-3.5 -3.5zM701.9 629.2l3.5 3.5l-3.5 3.5l-3.5 -3.5zM704.8 635.5l3.5 3.5l-3.5 3.5l-3.5 -3.5zM707.7 618.5l3.5 3.5l-3.5 3.5l-3.5 -3.5zM710.6 564.3l3.5 3.5l-3.5 3.5l-3.5 -3.5zM713.5 582.6l3.5 3.5l-3.5 3.5l-3.5 -3.5zM716.4 597.5l3.5 3.5l-3.5 3.5l-3.5 -3.5zM719.3 660.2l3.5 3.5l-3.5 3.5l-3.5 -3.5zM722.2 611.3l3.5 3.5l-3.5 3.5l-3.5 -3.5zM725.1 616.3l3.5 3.5l-3.5 3.5l-3.5 -3.5zM728.0 629.4l3.5 3.5l-3.5 3.5l-3.5 -3.5zM730.9 570.2l3.5 3.5l-3.5 3.5l-3.5 -3.5zM733.8 602.3l3.5 3.5l-3.5 3.5l-3.5 -3.5zM736.7 621.3l3.5 3.5l-3.5 3.5l-3.5 -3.5zM739.6 618.5l3.5 3.5l-3.5 3.5l-3.5 -3.5zM742.5 553.5l3.5 3.5l-3.5 3.5l-3.5 -3.5zM745.4 622.2l3.5 3.5l-3.5 3.5l-3.5 -3.5zM748.3 645.0l3.5 3.5l-3.5 3.5l-3.5 -3.5zM751.2 595.1l3.5 3.5l-3.5 3.5l-3.5 -3.5zM754.1 671.0l3.5 3.5l-3.5 3.5l-3.5 -3.5zM757.0 623.5l3.5 3.5l-3.5 3.5l-3.5 -3.5zM759.9 610.9l3.5 3.5l-3.5 3.5l-3.5 -3.5zM762.8 609.7l3.5 3.5l-3.5 3.5l-3.5 -3.5zM765.7 647.2l3.5 3.5l-3.5 3.5l-3.5 -3.5zM768.6 648.6l3.5 3.5l-3.5 3.5l-3.5 -3.5zM771.5 632.1l3.5 3.5l-3.5 3.5l-3.5 -3.5zM774.4 615.1l3.5 3.5l-3.5 3.5l-3.5 -3.5zM777.3 618.1l3.5 3.5l-3.5 3.5l-3.5 -3.5zM780.2 664.2l3.5 3.5l-3.5 3.5l-3.5 -3.5zM783.1 679.5l3.5 3.5l-3.5 3.5l-3.5 -3.5zM786.0 628.3l3.5 3.5l-3.5 3.5l-3.5 -3.5zM788.9 654.3l3.5 3.5l-3.5 3.5l-3.5 -3.5zM791.8 670.1l3.5 3.5l-3.5 3.5l-3.5 -3.5zM794.7 663.9l3.5 3.5l-3.5 3.5l-3.5 -3.5zM797.6 619.4l3.5 3.5l-3.5 3.5l-3.5 -3.5zM800.5 594.3l3.5 3.5l-3.5 3.5l-3.5 -3.5zM803.4 627.4l3.5 3.5l-3.5 3.5l-3.5 -3.5zM806.3 590.0l3.5 3.5l-3.5 3.5l-3.5 -3.5zM809.2 618.5l3.5 3.5l-3.5 3.5l-3.5 -3.5zM812.1 540.1l3.5 3.5l-3.5 3.5l-3.5 -3.5zM815.0 656.3l3.5 3.5l-3.5 3.5l-3.5 -3.5zM817.9 637.8l3.5 3.5l-3.5 3.5l-3.5 -3.5zM820.8 654.3l3.5 3.5l-3.5 3.5l-3.5 -3.5zM823.7 639.1l3.5 3.5l-3.5 3.5l-3.5 -3.5zM826.6 644.1l3.5 3.5l-3.5 3.5l-3.5 -3.5zM829.5 651.3l3.5 3.5l-3.5 3.5l-3.5 -3.5zM832.4 596.1l3.5 3.5l-3.5 3.5l-3.5 -3.5zM835.3 617.2l3.5 3.5l-3.5 3.5l-3.5 -3.5zM838.2 646.8l3.5 3.5l-3.5 3.5l-3.5 -3.5zM841.1 633.4l3.5 3.5l-3.5 3.5l-3.5 -3.5zM844.0 649.9l3.5 3.5l-3.5 3.5l-3.5 -3.5zM846.9 652.2l3.5 3.5l-3.5 3.5l-3.5 -3.5zM849.8 660.3l3.5 3.5l-3.5 3.5l-3.5 -3.5zM852.7 647.7l3.5 3.5l-3.5 3.5l-3.5 -3.5zM855.6 645.6l3.5 3.5l-3.5 3.5l-3.5 -3.5zM858.5 566.1l3.5 3.5l-3.5 3.5l-3.5 -3.5zM861.4 646.3l3.5 3.5l-3.5 3.5l-3.5 -3.5zM864.3 675.2l3.5 3.5l-3.5 3.5l-3.5 -3.5zM867.2 601.4l3.5 3.5l-3.5 3.5l-3.5 -3.5zM870.1 638.4l3.5 3.5l-3.5 3.5l-3.5 -3.5zM873.0 604.3l3.5 3.5l-3.5 3.5l-3.5 -3.5zM875.9 566.1l3.5 3.5l-3.5 3.5l-3.5 -3.5zM878.8 660.3l3.5 3.5l-3.5 3.5l-3.5 -3.5zM881.7 654.0l3.5 3.5l-3.5 3.5l-3.5 -3.5zM884.6 613.6l3.5 3.5l-3.5 3.5l-3.5 -3.5z" fill="#e9a70a"/><polyline points="78.5,697.5 81.5,728.5 84.5,719.5 87.5,702.5 90.5,690.5 93.5,686.5 96.5,738.5 99.5,717.5 102.5,708.5 104.5,698.5 107.5,721.5 110.5,708.5 113.5,700.5 116.5,673.5 119.5,680.5 122.5,692.5 125.5,682.5 128.5,722.5 131.5,736.5 134.5,711.5 136.5,685.5 139.5,744.5 142.5,704.5 145.5,740.5 148.5,700.5 151.5,700.5 154.5,721.5 157.5,657.5 160.5,726.5 162.5,748.5 165.5,710.5 168.5,702.5 171.5,743.5 174.5,724.5 177.5,696.5 180.5,673.5 183.5,643.5 186.5,701.5 189.5,708.5 192.5,708.5 194.5,698.5 197.5,717.5 200.5,772.5 203.5,726.5 206.5,697.5 209.5,737.5 212.5,726.5 215.5,707.5 218.5,690.5 220.5,703.5 223.5,697.5 226.5,686.5 229.5,676.5 232.5,712.5 235.5,716.5 238.5,726.5 241.5,728.5 244.5,703.5 247.5,729.5 250.5,738.5 252.5,728.5 255.5,678.5 258.5,730.5 261.5,733.5 264.5,706.5 267.5,722.5 270.5,733.5 273.5,721.5 276.5,711.5 278.5,766.5 281.5,751.5 284.5,727.5 287.5,694.5 290.5,738.5 293.5,714.5 296.5,732.5 299.5,693.5 302.5,726.5 305.5,732.5 308.5,718.5 310.5,752.5 313.5,716.5 316.5,772.5 319.5,710.5 322.5,721.5 325.5,713.5 328.5,758.5 331.5,716.5 334.5,734.5 336.5,749.5 339.5,698.5 342.5,745.5 345.5,735.5 348.5,695.5 351.5,686.5 354.5,697.5 357.5,709.5 360.5,684.5 363.5,709.5 366.5,735.5 368.5,739.5 371.5,710.5 374.5,725.5 377.5,687.5 380.5,702.5 383.5,699.5 386.5,728.5 389.5,653.5 392.5,722.5 394.5,747.5 397.5,709.5 400.5,668.5 403.5,685.5 406.5,709.5 409.5,701.5 412.5,703.5 415.5,727.5 418.5,731.5 421.5,701.5 424.5,690.5 426.5,689.5 429.5,711.5 432.5,690.5 435.5,693.5 438.5,719.5 441.5,754.5 444.5,689.5 447.5,694.5 450.5,722.5 452.5,687.5 455.5,703.5 458.5,719.5 461.5,682.5 464.5,710.5 467.5,711.5 470.5,708.5 473.5,684.5 476.5,679.5 479.5,733.5 482.5,733.5 484.5,718.5 487.5,755.5 490.5,724.5 493.5,678.5 496.5,671.5 499.5,699.5 502.5,756.5 505.5,740.5 508.5,748.5 510.5,670.5 513.5,676.5 516.5,703.5 519.5,698.5 522.5,724.5 525.5,714.5 528.5,717.5 531.5,734.5 534.5,703.5 537.5,715.5 540.5,736.5 542.5,729.5 545.5,713.5 548.5,719.5 551.5,728.5 554.5,715.5 557.5,734.5 560.5,732.5 563.5,728.5 566.5,691.5 568.5,674.5 571.5,716.5 574.5,698.5 577.5,731.5 580.5,690.5 583.5,734.5 586.5,694.5 589.5,741.5 592.5,705.5 595.5,682.5 598.5,717.5 600.5,709.5 603.5,712.5 606.5,704.5 609.5,661.5 612.5,734.5 615.5,766.5 618.5,780.5 621.5,721.5 624.5,738.5 626.5,710.5 629.5,706.5 632.5,676.5 635.5,742.5 638.5,743.5 641.5,727.5 644.5,696.5 647.5,730.5 650.5,742.5 653.5,722.5 656.5,720.5 658.5,738.5 661.5,692.5 664.5,740.5 667.5,740.5 670.5,705.5 673.5,735.5 676.5,718.5 679.5,694.5 682.5,734.5 684.5,680.5 687.5,741.5 690.5,775.5 693.5,700.5 696.5,715.5 699.5,664.5 702.5,706.5 705.5,740.5 708.5,721.5 711.5,716.5 714.5,706.5 716.5,706.5 719.5,740.5 722.5,703.5 725.5,693.5 728.5,717.5 731.5,746.5 734.5,737.5 737.5,685.5 740.5,701.5 742.5,733.5 745.5,720.5 748.5,723.5 751.5,723.5 754.5,713.5 757.5,690.5 760.5,707.5 763.5,740.5 766.5,742.5 769.5,738.5 772.5,754.5 774.5,743.5 777.5,721.5 780.5,730.5 783.5,739.5 786.5,719.5 789.5,736.5 792.5,704.5 795.5,710.5 798.5,698.5 800.5,685.5 803.5,688.5 806.5,701.5 809.5,676.5 812.5,695.5 815.5,726.5 818.5,731.5 821.5,718.5 824.5,693.5 827.5,679.5 830.5,730.5 832.5,690.5 835.5,711.5 838.5,664.5 841.5,711.5 844.5,681.5 847.5,679.5 850.5,704.5 853.5,703.5 856.5,706.5 858.5,721.5 861.5,716.5 864.5,756.5 867.5,710.5 870.5,724.5 873.5,744.5 876.5,727.5 879.5,726.5 882.5,733.5 885.5,713.5" fill="none" stroke="#0000ff" stroke-width="1" shape-rendering="crispEdges"/><path d="M78.4 693.6l3.5 3.5l-3.5 3.5l-3.5 -3.5zM81.3 724.1l3.5 3.5l-3.5 3.5l-3.5 -3.5zM84.2 715.2l3.5 3.5l-3.5 3.5l-3.5 -3.5zM87.1 698.5l3.5 3.5l-3.5 3.5l-3.5 -3.5zM90.0 687.0l3.5 3.5l-3.5 3.5l-3.5 -3.5zM92.9 682.3l3.5 3.5l-3.5 3.5l-3.5 -3.5zM95.8 734.3l3.5 3.5l-3.5 3.5l-3.5 -3.5zM98.7 713.4l3.5 3.5l-3.5 3.5l-3.5 -3.5zM101.6 704.9l3.5 3.5l-3.5 3.5l-3.5 -3.5zM104.5 694.2l3.5 3.5l-3.5 3.5l-3.5 -3.5zM107.4 717.5l3.5 3.5l-3.5 3.5l-3.5 -3.5zM110.3 704.9l3.5 3.5l-3.5 3.5l-3.5 -3.5zM113.2 696.3l3.5 3.5l-3.5 3.5l-3.5 -3.5zM116.1 669.1l3.5 3.5l-3.5 3.5l-3.5 -3.5zM119.0 676.9l3.5 3.5l-3.5 3.5l-3.5 -3.5zM121.9 688.2l3.5 3.5l-3.5 3.5l-3.5 -3.5zM124.8 678.4l3.5 3.5l-3.5 3.5l-3.5 -3.5zM127.7 718.4l3.5 3.5l-3.5 3.5l-3.5 -3.5zM130.6 732.6l3.5 3.5l-3.5 3.5l-3.5 -3.5zM133.5 707.1l3.5 3.5l-3.5 3.5l-3.5 -3.5zM136.4 681.1l3.5 3.5l-3.5 3.5l-3.5 -3.5zM139.3 740.3l3.5 3.5l-3.5 3.5l-3.5 -3.5zM142.2 700.3l3.5 3.5l-3.5 3.5l-3.5 -3.5zM145.1 736.3l3.5 3.5l-3.5 3.5l-3.5 -3.5zM148.0 696.3l3.5 3.5l-3.5 3.5l-3.5 -3.5zM150.9 696.3l3.5 3.5l-3.5 3.5l-3.5 -3.5zM153.8 717.5l3.5 3.5l-3.5 3.5l-3.5 -3.5zM156.7 653.3l3.5 3.5l-3.5 3.5l-3.5 -3.5zM159.6 722.3l3.5 3.5l-3.5 3.5l-3.5 -3.5zM162.5 744.4l3.5 3.5l-3.5 3.5l-3.5 -3.5zM165.4 706.2l3.5 3.5l-3.5 3.5l-3.5 -3.5zM168.3 698.5l3.5 3.5l-3.5 3.5l-3.5 -3.5zM171.2 739.4l3.5 3.5l-3.5 3.5l-3.5 -3.5zM174.1 720.5l3.5 3.5l-3.5 3.5l-3.5 -3.5zM177.0 692.2l3.5 3.5l-3.5 3.5l-3.5 -3.5zM179.9 669.4l3.5 3.5l-3.5 3.5l-3.5 -3.5zM182.8 639.3l3.5 3.5l-3.5 3.5l-3.5 -3.5zM185.7 697.6l3.5 3.5l-3.5 3.5l-3.5 -3.5zM188.6 704.9l3.5 3.5l-3.5 3.5l-3.5 -3.5zM191.5 704.9l3.5 3.5l-3.5 3.5l-3.5 -3.5zM194.4 694.0l3.5 3.5l-3.5 3.5l-3.5 -3.5zM197.3 713.4l3.5 3.5l-3.5 3.5l-3.5 -3.5zM200.2 768.6l3.5 3.5l-3.5 3.5l-3.5 -3.5zM203.1 722.3l3.5 3.5l-3.5 3.5l-3.5 -3.5zM206.0 693.3l3.5 3.5l-3.5 3.5l-3.5 -3.5zM208.9 733.5l3.5 3.5l-3.5 3.5l-3.5 -3.5zM211.8 722.3l3.5 3.5l-3.5 3.5l-3.5 -3.5zM214.7 703.5l3.5 3.5l-3.5 3.5l-3.5 -3.5zM217.6 687.0l3.5 3.5l-3.5 3.5l-3.5 -3.5zM220.5 699.4l3.5 3.5l-3.5 3.5l-3.5 -3.5zM223.4 693.6l3.5 3.5l-3.5 3.5l-3.5 -3.5zM226.3 682.5l3.5 3.5l-3.5 3.5l-3.5 -3.5zM229.2 672.1l3.5 3.5l-3.5 3.5l-3.5 -3.5zM232.1 708.3l3.5 3.5l-3.5 3.5l-3.5 -3.5zM235.0 712.5l3.5 3.5l-3.5 3.5l-3.5 -3.5zM237.9 722.3l3.5 3.5l-3.5 3.5l-3.5 -3.5zM240.8 724.1l3.5 3.5l-3.5 3.5l-3.5 -3.5zM243.7 699.9l3.5 3.5l-3.5 3.5l-3.5 -3.5zM246.6 725.9l3.5 3.5l-3.5 3.5l-3.5 -3.5zM249.5 734.3l3.5 3.5l-3.5 3.5l-3.5 -3.5zM252.4 724.1l3.5 3.5l-3.5 3.5l-3.5 -3.5zM255.3 674.8l3.5 3.5l-3.5 3.5l-3.5 -3.5zM258.2 726.8l3.5 3.5l-3.5 3.5l-3.5 -3.5zM261.1 729.1l3.5 3.5l-3.5 3.5l-3.5 -3.5zM264.0 702.2l3.5 3.5l-3.5 3.5l-3.5 -3.5zM266.9 718.4l3.5 3.5l-3.5 3.5l-3.5 -3.5zM269.8 729.1l3.5 3.5l-3.5 3.5l-3.5 -3.5zM272.7 717.3l3.5 3.5l-3.5 3.5l-3.5 -3.5zM275.6 707.1l3.5 3.5l-3.5 3.5l-3.5 -3.5zM278.5 762.2l3.5 3.5l-3.5 3.5l-3.5 -3.5zM281.4 747.1l3.5 3.5l-3.5 3.5l-3.5 -3.5zM284.3 723.2l3.5 3.5l-3.5 3.5l-3.5 -3.5zM287.2 690.0l3.5 3.5l-3.5 3.5l-3.5 -3.5zM290.1 734.9l3.5 3.5l-3.5 3.5l-3.5 -3.5zM293.0 711.0l3.5 3.5l-3.5 3.5l-3.5 -3.5zM295.9 728.6l3.5 3.5l-3.5 3.5l-3.5 -3.5zM298.8 689.1l3.5 3.5l-3.5 3.5l-3.5 -3.5zM301.7 722.3l3.5 3.5l-3.5 3.5l-3.5 -3.5zM304.6 728.1l3.5 3.5l-3.5 3.5l-3.5 -3.5zM307.5 714.3l3.5 3.5l-3.5 3.5l-3.5 -3.5zM310.4 748.3l3.5 3.5l-3.5 3.5l-3.5 -3.5zM313.3 712.1l3.5 3.5l-3.5 3.5l-3.5 -3.5zM316.2 768.6l3.5 3.5l-3.5 3.5l-3.5 -3.5zM319.1 706.7l3.5 3.5l-3.5 3.5l-3.5 -3.5zM322.0 717.3l3.5 3.5l-3.5 3.5l-3.5 -3.5zM324.9 709.2l3.5 3.5l-3.5 3.5l-3.5 -3.5zM327.8 755.0l3.5 3.5l-3.5 3.5l-3.5 -3.5zM330.7 712.1l3.5 3.5l-3.5 3.5l-3.5 -3.5zM333.6 730.0l3.5 3.5l-3.5 3.5l-3.5 -3.5zM336.5 745.3l3.5 3.5l-3.5 3.5l-3.5 -3.5zM339.4 694.9l3.5 3.5l-3.5 3.5l-3.5 -3.5zM342.3 741.2l3.5 3.5l-3.5 3.5l-3.5 -3.5zM345.2 731.3l3.5 3.5l-3.5 3.5l-3.5 -3.5zM348.1 691.8l3.5 3.5l-3.5 3.5l-3.5 -3.5zM351.0 682.3l3.5 3.5l-3.5 3.5l-3.5 -3.5zM353.9 693.6l3.5 3.5l-3.5 3.5l-3.5 -3.5zM356.8 705.6l3.5 3.5l-3.5 3.5l-3.5 -3.5zM359.7 680.7l3.5 3.5l-3.5 3.5l-3.5 -3.5zM362.6 705.3l3.5 3.5l-3.5 3.5l-3.5 -3.5zM365.5 731.3l3.5 3.5l-3.5 3.5l-3.5 -3.5zM368.4 735.2l3.5 3.5l-3.5 3.5l-3.5 -3.5zM371.3 706.2l3.5 3.5l-3.5 3.5l-3.5 -3.5zM374.2 721.4l3.5 3.5l-3.5 3.5l-3.5 -3.5zM377.1 683.2l3.5 3.5l-3.5 3.5l-3.5 -3.5zM380.0 698.7l3.5 3.5l-3.5 3.5l-3.5 -3.5zM382.9 695.4l3.5 3.5l-3.5 3.5l-3.5 -3.5zM385.8 725.0l3.5 3.5l-3.5 3.5l-3.5 -3.5zM388.7 649.1l3.5 3.5l-3.5 3.5l-3.5 -3.5zM391.6 718.4l3.5 3.5l-3.5 3.5l-3.5 -3.5zM394.5 743.5l3.5 3.5l-3.5 3.5l-3.5 -3.5zM397.4 705.3l3.5 3.5l-3.5 3.5l-3.5 -3.5zM400.3 664.9l3.5 3.5l-3.5 3.5l-3.5 -3.5zM403.2 681.4l3.5 3.5l-3.5 3.5l-3.5 -3.5zM406.1 705.3l3.5 3.5l-3.5 3.5l-3.5 -3.5zM409.0 697.2l3.5 3.5l-3.5 3.5l-3.5 -3.5zM411.9 699.4l3.5 3.5l-3.5 3.5l-3.5 -3.5zM414.8 723.6l3.5 3.5l-3.5 3.5l-3.5 -3.5zM417.7 727.4l3.5 3.5l-3.5 3.5l-3.5 -3.5zM420.6 697.6l3.5 3.5l-3.5 3.5l-3.5 -3.5zM423.5 686.1l3.5 3.5l-3.5 3.5l-3.5 -3.5zM426.4 685.6l3.5 3.5l-3.5 3.5l-3.5 -3.5zM429.3 707.4l3.5 3.5l-3.5 3.5l-3.5 -3.5zM432.2 687.0l3.5 3.5l-3.5 3.5l-3.5 -3.5zM435.1 689.1l3.5 3.5l-3.5 3.5l-3.5 -3.5zM438.0 715.2l3.5 3.5l-3.5 3.5l-3.5 -3.5zM440.9 750.1l3.5 3.5l-3.5 3.5l-3.5 -3.5zM443.8 685.2l3.5 3.5l-3.5 3.5l-3.5 -3.5zM446.7 690.9l3.5 3.5l-3.5 3.5l-3.5 -3.5zM449.6 718.4l3.5 3.5l-3.5 3.5l-3.5 -3.5zM452.5 683.4l3.5 3.5l-3.5 3.5l-3.5 -3.5zM455.4 699.4l3.5 3.5l-3.5 3.5l-3.5 -3.5zM458.3 715.2l3.5 3.5l-3.5 3.5l-3.5 -3.5zM461.2 678.4l3.5 3.5l-3.5 3.5l-3.5 -3.5zM464.1 706.2l3.5 3.5l-3.5 3.5l-3.5 -3.5zM467.0 707.1l3.5 3.5l-3.5 3.5l-3.5 -3.5zM469.9 704.4l3.5 3.5l-3.5 3.5l-3.5 -3.5zM472.8 680.2l3.5 3.5l-3.5 3.5l-3.5 -3.5zM475.7 675.2l3.5 3.5l-3.5 3.5l-3.5 -3.5zM478.6 729.1l3.5 3.5l-3.5 3.5l-3.5 -3.5zM481.5 729.1l3.5 3.5l-3.5 3.5l-3.5 -3.5zM484.4 714.8l3.5 3.5l-3.5 3.5l-3.5 -3.5zM487.3 751.4l3.5 3.5l-3.5 3.5l-3.5 -3.5zM490.2 720.2l3.5 3.5l-3.5 3.5l-3.5 -3.5zM493.1 674.8l3.5 3.5l-3.5 3.5l-3.5 -3.5zM496.0 667.3l3.5 3.5l-3.5 3.5l-3.5 -3.5zM498.9 695.1l3.5 3.5l-3.5 3.5l-3.5 -3.5zM501.8 752.3l3.5 3.5l-3.5 3.5l-3.5 -3.5zM504.7 737.0l3.5 3.5l-3.5 3.5l-3.5 -3.5zM507.6 744.4l3.5 3.5l-3.5 3.5l-3.5 -3.5zM510.5 666.4l3.5 3.5l-3.5 3.5l-3.5 -3.5zM513.4 672.1l3.5 3.5l-3.5 3.5l-3.5 -3.5zM516.3 699.9l3.5 3.5l-3.5 3.5l-3.5 -3.5zM519.2 694.2l3.5 3.5l-3.5 3.5l-3.5 -3.5zM522.1 720.2l3.5 3.5l-3.5 3.5l-3.5 -3.5zM525.0 711.0l3.5 3.5l-3.5 3.5l-3.5 -3.5zM527.9 713.4l3.5 3.5l-3.5 3.5l-3.5 -3.5zM530.8 730.4l3.5 3.5l-3.5 3.5l-3.5 -3.5zM533.7 699.4l3.5 3.5l-3.5 3.5l-3.5 -3.5zM536.6 711.2l3.5 3.5l-3.5 3.5l-3.5 -3.5zM539.5 732.2l3.5 3.5l-3.5 3.5l-3.5 -3.5zM542.4 725.9l3.5 3.5l-3.5 3.5l-3.5 -3.5zM545.3 709.2l3.5 3.5l-3.5 3.5l-3.5 -3.5zM548.2 715.2l3.5 3.5l-3.5 3.5l-3.5 -3.5zM551.1 724.1l3.5 3.5l-3.5 3.5l-3.5 -3.5zM554.0 711.2l3.5 3.5l-3.5 3.5l-3.5 -3.5zM556.9 730.4l3.5 3.5l-3.5 3.5l-3.5 -3.5zM559.8 728.1l3.5 3.5l-3.5 3.5l-3.5 -3.5zM562.7 724.1l3.5 3.5l-3.5 3.5l-3.5 -3.5zM565.6 687.4l3.5 3.5l-3.5 3.5l-3.5 -3.5zM568.5 670.0l3.5 3.5l-3.5 3.5l-3.5 -3.5zM571.4 712.5l3.5 3.5l-3.5 3.5l-3.5 -3.5zM574.3 694.9l3.5 3.5l-3.5 3.5l-3.5 -3.5zM577.2 727.4l3.5 3.5l-3.5 3.5l-3.5 -3.5zM580.1 687.0l3.5 3.5l-3.5 3.5l-3.5 -3.5zM583.0 730.0l3.5 3.5l-3.5 3.5l-3.5 -3.5zM585.9 690.9l3.5 3.5l-3.5 3.5l-3.5 -3.5zM588.8 737.6l3.5 3.5l-3.5 3.5l-3.5 -3.5zM591.7 701.2l3.5 3.5l-3.5 3.5l-3.5 -3.5zM594.6 678.4l3.5 3.5l-3.5 3.5l-3.5 -3.5zM597.5 713.4l3.5 3.5l-3.5 3.5l-3.5 -3.5zM600.4 705.6l3.5 3.5l-3.5 3.5l-3.5 -3.5zM603.3 708.3l3.5 3.5l-3.5 3.5l-3.5 -3.5zM606.2 700.3l3.5 3.5l-3.5 3.5l-3.5 -3.5zM609.1 657.4l3.5 3.5l-3.5 3.5l-3.5 -3.5zM612.0 730.4l3.5 3.5l-3.5 3.5l-3.5 -3.5zM614.9 762.2l3.5 3.5l-3.5 3.5l-3.5 -3.5zM617.8 776.1l3.5 3.5l-3.5 3.5l-3.5 -3.5zM620.7 717.3l3.5 3.5l-3.5 3.5l-3.5 -3.5zM623.6 734.3l3.5 3.5l-3.5 3.5l-3.5 -3.5zM626.5 706.2l3.5 3.5l-3.5 3.5l-3.5 -3.5zM629.4 702.6l3.5 3.5l-3.5 3.5l-3.5 -3.5zM632.3 672.5l3.5 3.5l-3.5 3.5l-3.5 -3.5zM635.2 738.5l3.5 3.5l-3.5 3.5l-3.5 -3.5zM638.1 739.4l3.5 3.5l-3.5 3.5l-3.5 -3.5zM641.0 723.6l3.5 3.5l-3.5 3.5l-3.5 -3.5zM643.9 692.4l3.5 3.5l-3.5 3.5l-3.5 -3.5zM646.8 726.8l3.5 3.5l-3.5 3.5l-3.5 -3.5zM649.7 738.5l3.5 3.5l-3.5 3.5l-3.5 -3.5zM652.6 718.4l3.5 3.5l-3.5 3.5l-3.5 -3.5zM655.5 716.1l3.5 3.5l-3.5 3.5l-3.5 -3.5zM658.4 734.9l3.5 3.5l-3.5 3.5l-3.5 -3.5zM661.3 688.2l3.5 3.5l-3.5 3.5l-3.5 -3.5zM664.2 736.3l3.5 3.5l-3.5 3.5l-3.5 -3.5zM667.1 737.0l3.5 3.5l-3.5 3.5l-3.5 -3.5zM670.0 701.2l3.5 3.5l-3.5 3.5l-3.5 -3.5zM672.9 731.3l3.5 3.5l-3.5 3.5l-3.5 -3.5zM675.8 714.3l3.5 3.5l-3.5 3.5l-3.5 -3.5zM678.7 690.0l3.5 3.5l-3.5 3.5l-3.5 -3.5zM681.6 730.0l3.5 3.5l-3.5 3.5l-3.5 -3.5zM684.5 676.1l3.5 3.5l-3.5 3.5l-3.5 -3.5zM687.4 737.2l3.5 3.5l-3.5 3.5l-3.5 -3.5zM690.3 771.1l3.5 3.5l-3.5 3.5l-3.5 -3.5zM693.2 696.3l3.5 3.5l-3.5 3.5l-3.5 -3.5zM696.1 711.2l3.5 3.5l-3.5 3.5l-3.5 -3.5zM699.0 660.1l3.5 3.5l-3.5 3.5l-3.5 -3.5zM701.9 702.2l3.5 3.5l-3.5 3.5l-3.5 -3.5zM704.8 737.0l3.5 3.5l-3.5 3.5l-3.5 -3.5zM707.7 717.3l3.5 3.5l-3.5 3.5l-3.5 -3.5zM710.6 712.5l3.5 3.5l-3.5 3.5l-3.5 -3.5zM713.5 702.2l3.5 3.5l-3.5 3.5l-3.5 -3.5zM716.4 702.2l3.5 3.5l-3.5 3.5l-3.5 -3.5zM719.3 736.3l3.5 3.5l-3.5 3.5l-3.5 -3.5zM722.2 699.9l3.5 3.5l-3.5 3.5l-3.5 -3.5zM725.1 689.1l3.5 3.5l-3.5 3.5l-3.5 -3.5zM728.0 713.4l3.5 3.5l-3.5 3.5l-3.5 -3.5zM730.9 742.4l3.5 3.5l-3.5 3.5l-3.5 -3.5zM733.8 733.5l3.5 3.5l-3.5 3.5l-3.5 -3.5zM736.7 681.1l3.5 3.5l-3.5 3.5l-3.5 -3.5zM739.6 697.6l3.5 3.5l-3.5 3.5l-3.5 -3.5zM742.5 729.1l3.5 3.5l-3.5 3.5l-3.5 -3.5zM745.4 716.9l3.5 3.5l-3.5 3.5l-3.5 -3.5zM748.3 719.6l3.5 3.5l-3.5 3.5l-3.5 -3.5zM751.2 719.6l3.5 3.5l-3.5 3.5l-3.5 -3.5zM754.1 709.2l3.5 3.5l-3.5 3.5l-3.5 -3.5zM757.0 686.1l3.5 3.5l-3.5 3.5l-3.5 -3.5zM759.9 703.5l3.5 3.5l-3.5 3.5l-3.5 -3.5zM762.8 736.3l3.5 3.5l-3.5 3.5l-3.5 -3.5zM765.7 738.5l3.5 3.5l-3.5 3.5l-3.5 -3.5zM768.6 734.9l3.5 3.5l-3.5 3.5l-3.5 -3.5zM771.5 751.0l3.5 3.5l-3.5 3.5l-3.5 -3.5zM774.4 739.4l3.5 3.5l-3.5 3.5l-3.5 -3.5zM777.3 717.3l3.5 3.5l-3.5 3.5l-3.5 -3.5zM780.2 726.3l3.5 3.5l-3.5 3.5l-3.5 -3.5zM783.1 735.2l3.5 3.5l-3.5 3.5l-3.5 -3.5zM786.0 715.2l3.5 3.5l-3.5 3.5l-3.5 -3.5zM788.9 732.6l3.5 3.5l-3.5 3.5l-3.5 -3.5zM791.8 700.8l3.5 3.5l-3.5 3.5l-3.5 -3.5zM794.7 706.5l3.5 3.5l-3.5 3.5l-3.5 -3.5zM797.6 694.2l3.5 3.5l-3.5 3.5l-3.5 -3.5zM800.5 681.1l3.5 3.5l-3.5 3.5l-3.5 -3.5zM803.4 684.3l3.5 3.5l-3.5 3.5l-3.5 -3.5zM806.3 697.6l3.5 3.5l-3.5 3.5l-3.5 -3.5zM809.2 672.1l3.5 3.5l-3.5 3.5l-3.5 -3.5zM812.1 691.5l3.5 3.5l-3.5 3.5l-3.5 -3.5zM815.0 722.3l3.5 3.5l-3.5 3.5l-3.5 -3.5zM817.9 727.7l3.5 3.5l-3.5 3.5l-3.5 -3.5zM820.8 714.3l3.5 3.5l-3.5 3.5l-3.5 -3.5zM823.7 689.1l3.5 3.5l-3.5 3.5l-3.5 -3.5zM826.6 675.2l3.5 3.5l-3.5 3.5l-3.5 -3.5zM829.5 726.3l3.5 3.5l-3.5 3.5l-3.5 -3.5zM832.4 686.1l3.5 3.5l-3.5 3.5l-3.5 -3.5zM835.3 707.6l3.5 3.5l-3.5 3.5l-3.5 -3.5zM838.2 660.1l3.5 3.5l-3.5 3.5l-3.5 -3.5zM841.1 707.6l3.5 3.5l-3.5 3.5l-3.5 -3.5zM844.0 677.5l3.5 3.5l-3.5 3.5l-3.5 -3.5zM846.9 675.3l3.5 3.5l-3.5 3.5l-3.5 -3.5zM849.8 700.8l3.5 3.5l-3.5 3.5l-3.5 -3.5zM852.7 699.4l3.5 3.5l-3.5 3.5l-3.5 -3.5zM855.6 702.6l3.5 3.5l-3.5 3.5l-3.5 -3.5zM858.5 717.3l3.5 3.5l-3.5 3.5l-3.5 -3.5zM861.4 712.5l3.5 3.5l-3.5 3.5l-3.5 -3.5zM864.3 752.3l3.5 3.5l-3.5 3.5l-3.5 -3.5zM867.2 706.2l3.5 3.5l-3.5 3.5l-3.5 -3.5zM870.1 720.2l3.5 3.5l-3.5 3.5l-3.5 -3.5zM873.0 740.3l3.5 3.5l-3.5 3.5l-3.5 -3.5zM875.9 723.2l3.5 3.5l-3.5 3.5l-3.5 -3.5zM878.8 722.7l3.5 3.5l-3.5 3.5l-3.5 -3.5zM881.7 729.5l3.5 3.5l-3.5 3.5l-3.5 -3.5zM884.6 709.2l3.5 3.5l-3.5 3.5l-3.5 -3.5z" fill="#0000ff"/><polyline points="78.5,936.5 81.5,939.5 84.5,942.5 87.5,934.5 90.5,942.5 93.5,935.5 96.5,944.5 99.5,942.5 102.5,941.5 104.5,936.5 107.5,931.5 110.5,933.5 113.5,934.5 116.5,934.5 119.5,936.5 122.5,942.5 125.5,937.5 128.5,934.5 131.5,938.5 134.5,942.5 136.5,942.5 139.5,942.5 142.5,942.5 145.5,933.5 148.5,940.5 151.5,942.5 154.5,933.5 157.5,935.5 160.5,937.5 162.5,936.5 165.5,935.5 168.5,934.5 171.5,937.5 174.5,944.5 177.5,934.5 180.5,934.5 183.5,941.5 186.5,941.5 189.5,940.5 192.5,938.5 194.5,937.5 197.5,939.5 200.5,934.5 203.5,934.5 206.5,936.5 209.5,938.5 212.5,945.5 215.5,942.5 218.5,935.5 220.5,946.5 223.5,939.5 226.5,942.5 229.5,936.5 232.5,932.5 235.5,929.5 238.5,937.5 241.5,940.5 244.5,939.5 247.5,932.5 250.5,931.5 252.5,924.5 255.5,932.5 258.5,941.5 261.5,931.5 264.5,930.5 267.5,936.5 270.5,942.5 273.5,936.5 276.5,932.5 278.5,939.5 281.5,928.5 284.5,930.5 287.5,934.5 290.5,941.5 293.5,942.5 296.5,943.5 299.5,939.5 302.5,935.5 305.5,934.5 308.5,941.5 310.5,939.5 313.5,926.5 316.5,934.5 319.5,934.5 322.5,942.5 325.5,946.5 328.5,936.5 331.5,946.5 334.5,939.5 336.5,931.5 339.5,934.5 342.5,934.5 345.5,939.5 348.5,940.5 351.5,942.5 354.5,939.5 357.5,934.5 360.5,935.5 363.5,937.5 366.5,941.5 368.5,935.5 371.5,939.5 374.5,948.5 377.5,939.5 380.5,934.5 383.5,931.5 386.5,933.5 389.5,941.5 392.5,945.5 394.5,935.5 397.5,939.5 400.5,935.5 403.5,934.5 406.5,943.5 409.5,937.5 412.5,929.5 415.5,939.5 418.5,935.5 421.5,926.5 424.5,932.5 426.5,934.5 429.5,936.5 432.5,942.5 435.5,935.5 438.5,936.5 441.5,939.5 444.5,949.5 447.5,940.5 450.5,927.5 452.5,942.5 455.5,939.5 458.5,935.5 461.5,937.5 464.5,942.5 467.5,934.5 470.5,934.5 473.5,935.5 476.5,938.5 479.5,936.5 482.5,938.5 484.5,935.5 487.5,934.5 490.5,946.5 493.5,934.5 496.5,930.5 499.5,935.5 502.5,943.5 505.5,937.5 508.5,938.5 510.5,938.5 513.5,937.5 516.5,934.5 519.5,942.5 522.5,932.5 525.5,939.5 528.5,934.5 531.5,934.5 534.5,943.5 537.5,936.5 540.5,934.5 542.5,942.5 545.5,938.5 548.5,936.5 551.5,934.5 554.5,935.5 557.5,934.5 560.5,935.5 563.5,936.5 566.5,936.5 568.5,934.5 571.5,939.5 574.5,932.5 577.5,937.5 580.5,939.5 583.5,939.5 586.5,937.5 589.5,930.5 592.5,934.5 595.5,936.5 598.5,941.5 600.5,933.5 603.5,936.5 606.5,931.5 609.5,940.5 612.5,934.5 615.5,947.5 618.5,938.5 621.5,928.5 624.5,934.5 626.5,934.5 629.5,943.5 632.5,935.5 635.5,929.5 638.5,943.5 641.5,932.5 644.5,944.5 647.5,934.5 650.5,939.5 653.5,932.5 656.5,937.5 658.5,934.5 661.5,934.5 664.5,941.5 667.5,932.5 670.5,937.5 673.5,938.5 676.5,937.5 679.5,931.5 682.5,934.5 684.5,941.5 687.5,942.5 690.5,938.5 693.5,939.5 696.5,934.5 699.5,938.5 702.5,934.5 705.5,935.5 708.5,934.5 711.5,935.5 714.5,942.5 716.5,934.5 719.5,941.5 722.5,936.5 725.5,943.5 728.5,943.5 731.5,935.5 734.5,935.5 737.5,932.5 740.5,947.5 742.5,935.5 745.5,927.5 748.5,934.5 751.5,939.5 754.5,936.5 757.5,931.5 760.5,937.5 763.5,941.5 766.5,936.5 769.5,939.5 772.5,945.5 774.5,944.5 777.5,934.5 780.5,940.5 783.5,934.5 786.5,941.5 789.5,934.5 792.5,943.5 795.5,944.5 798.5,937.5 800.5,934.5 803.5,940.5 806.5,937.5 809.5,930.5 812.5,932.5 815.5,934.5 818.5,931.5 821.5,928.5 824.5,942.5 827.5,940.5 830.5,937.5 832.5,936.5 835.5,939.5 838.5,942.5 841.5,947.5 844.5,934.5 847.5,936.5 850.5,942.5 853.5,937.5 856.5,934.5 858.5,940.5 861.5,934.5 864.5,928.5 867.5,944.5 870.5,942.5 873.5,940.5 876.5,939.5 879.5,939.5 882.5,938.5 885.5,937.5" fill="none" stroke="#00ff00" stroke-width="1" shape-rendering="crispEdges"/><path d="M78.4 932.7l3.5 3.5l-3.5 3.5l-3.5 -3.5zM81.3 935.4l3.5 3.5l-3.5 3.5l-3.5 -3.5zM84.2 938.1l3.5 3.5l-3.5 3.5l-3.5 -3.5zM87.1 930.9l3.5 3.5l-3.5 3.5l-3.5 -3.5zM90.0 938.1l3.5 3.5l-3.5 3.5l-3.5 -3.5zM92.9 931.8l3.5 3.5l-3.5 3.5l-3.5 -3.5zM95.8 940.4l3.5 3.5l-3.5 3.5l-3.5 -3.5zM98.7 938.1l3.5 3.5l-3.5 3.5l-3.5 -3.5zM101.6 937.2l3.5 3.5l-3.5 3.5l-3.5 -3.5zM104.5 932.7l3.5 3.5l-3.5 3.5l-3.5 -3.5zM107.4 927.3l3.5 3.5l-3.5 3.5l-3.5 -3.5zM110.3 929.1l3.5 3.5l-3.5 3.5l-3.5 -3.5zM113.2 930.0l3.5 3.5l-3.5 3.5l-3.5 -3.5zM116.1 930.0l3.5 3.5l-3.5 3.5l-3.5 -3.5zM119.0 932.7l3.5 3.5l-3.5 3.5l-3.5 -3.5zM121.9 939.0l3.5 3.5l-3.5 3.5l-3.5 -3.5zM124.8 933.6l3.5 3.5l-3.5 3.5l-3.5 -3.5zM127.7 930.0l3.5 3.5l-3.5 3.5l-3.5 -3.5zM130.6 934.5l3.5 3.5l-3.5 3.5l-3.5 -3.5zM133.5 939.0l3.5 3.5l-3.5 3.5l-3.5 -3.5zM136.4 938.1l3.5 3.5l-3.5 3.5l-3.5 -3.5zM139.3 938.1l3.5 3.5l-3.5 3.5l-3.5 -3.5zM142.2 939.0l3.5 3.5l-3.5 3.5l-3.5 -3.5zM145.1 929.1l3.5 3.5l-3.5 3.5l-3.5 -3.5zM148.0 936.3l3.5 3.5l-3.5 3.5l-3.5 -3.5zM150.9 939.0l3.5 3.5l-3.5 3.5l-3.5 -3.5zM153.8 929.1l3.5 3.5l-3.5 3.5l-3.5 -3.5zM156.7 931.8l3.5 3.5l-3.5 3.5l-3.5 -3.5zM159.6 933.9l3.5 3.5l-3.5 3.5l-3.5 -3.5zM162.5 932.7l3.5 3.5l-3.5 3.5l-3.5 -3.5zM165.4 931.8l3.5 3.5l-3.5 3.5l-3.5 -3.5zM168.3 930.0l3.5 3.5l-3.5 3.5l-3.5 -3.5zM171.2 933.6l3.5 3.5l-3.5 3.5l-3.5 -3.5zM174.1 940.4l3.5 3.5l-3.5 3.5l-3.5 -3.5zM177.0 930.9l3.5 3.5l-3.5 3.5l-3.5 -3.5zM179.9 930.0l3.5 3.5l-3.5 3.5l-3.5 -3.5zM182.8 937.2l3.5 3.5l-3.5 3.5l-3.5 -3.5zM185.7 937.2l3.5 3.5l-3.5 3.5l-3.5 -3.5zM188.6 936.3l3.5 3.5l-3.5 3.5l-3.5 -3.5zM191.5 934.5l3.5 3.5l-3.5 3.5l-3.5 -3.5zM194.4 933.6l3.5 3.5l-3.5 3.5l-3.5 -3.5zM197.3 935.4l3.5 3.5l-3.5 3.5l-3.5 -3.5zM200.2 930.0l3.5 3.5l-3.5 3.5l-3.5 -3.5zM203.1 930.9l3.5 3.5l-3.5 3.5l-3.5 -3.5zM206.0 932.7l3.5 3.5l-3.5 3.5l-3.5 -3.5zM208.9 935.0l3.5 3.5l-3.5 3.5l-3.5 -3.5zM211.8 941.1l3.5 3.5l-3.5 3.5l-3.5 -3.5zM214.7 938.1l3.5 3.5l-3.5 3.5l-3.5 -3.5zM217.6 931.4l3.5 3.5l-3.5 3.5l-3.5 -3.5zM220.5 942.2l3.5 3.5l-3.5 3.5l-3.5 -3.5zM223.4 935.4l3.5 3.5l-3.5 3.5l-3.5 -3.5zM226.3 938.1l3.5 3.5l-3.5 3.5l-3.5 -3.5zM229.2 932.7l3.5 3.5l-3.5 3.5l-3.5 -3.5zM232.1 928.2l3.5 3.5l-3.5 3.5l-3.5 -3.5zM235.0 925.5l3.5 3.5l-3.5 3.5l-3.5 -3.5zM237.9 933.9l3.5 3.5l-3.5 3.5l-3.5 -3.5zM240.8 936.8l3.5 3.5l-3.5 3.5l-3.5 -3.5zM243.7 935.4l3.5 3.5l-3.5 3.5l-3.5 -3.5zM246.6 928.2l3.5 3.5l-3.5 3.5l-3.5 -3.5zM249.5 927.3l3.5 3.5l-3.5 3.5l-3.5 -3.5zM252.4 921.0l3.5 3.5l-3.5 3.5l-3.5 -3.5zM255.3 928.2l3.5 3.5l-3.5 3.5l-3.5 -3.5zM258.2 937.2l3.5 3.5l-3.5 3.5l-3.5 -3.5zM261.1 927.3l3.5 3.5l-3.5 3.5l-3.5 -3.5zM264.0 926.4l3.5 3.5l-3.5 3.5l-3.5 -3.5zM266.9 932.7l3.5 3.5l-3.5 3.5l-3.5 -3.5zM269.8 938.1l3.5 3.5l-3.5 3.5l-3.5 -3.5zM272.7 932.7l3.5 3.5l-3.5 3.5l-3.5 -3.5zM275.6 928.2l3.5 3.5l-3.5 3.5l-3.5 -3.5zM278.5 935.4l3.5 3.5l-3.5 3.5l-3.5 -3.5zM281.4 924.6l3.5 3.5l-3.5 3.5l-3.5 -3.5zM284.3 926.4l3.5 3.5l-3.5 3.5l-3.5 -3.5zM287.2 930.0l3.5 3.5l-3.5 3.5l-3.5 -3.5zM290.1 937.2l3.5 3.5l-3.5 3.5l-3.5 -3.5zM293.0 939.0l3.5 3.5l-3.5 3.5l-3.5 -3.5zM295.9 939.9l3.5 3.5l-3.5 3.5l-3.5 -3.5zM298.8 935.4l3.5 3.5l-3.5 3.5l-3.5 -3.5zM301.7 931.8l3.5 3.5l-3.5 3.5l-3.5 -3.5zM304.6 930.0l3.5 3.5l-3.5 3.5l-3.5 -3.5zM307.5 937.2l3.5 3.5l-3.5 3.5l-3.5 -3.5zM310.4 935.4l3.5 3.5l-3.5 3.5l-3.5 -3.5zM313.3 922.8l3.5 3.5l-3.5 3.5l-3.5 -3.5zM316.2 930.0l3.5 3.5l-3.5 3.5l-3.5 -3.5zM319.1 930.9l3.5 3.5l-3.5 3.5l-3.5 -3.5zM322.0 938.1l3.5 3.5l-3.5 3.5l-3.5 -3.5zM324.9 942.5l3.5 3.5l-3.5 3.5l-3.5 -3.5zM327.8 932.7l3.5 3.5l-3.5 3.5l-3.5 -3.5zM330.7 942.5l3.5 3.5l-3.5 3.5l-3.5 -3.5zM333.6 935.4l3.5 3.5l-3.5 3.5l-3.5 -3.5zM336.5 927.3l3.5 3.5l-3.5 3.5l-3.5 -3.5zM339.4 930.9l3.5 3.5l-3.5 3.5l-3.5 -3.5zM342.3 930.0l3.5 3.5l-3.5 3.5l-3.5 -3.5zM345.2 935.4l3.5 3.5l-3.5 3.5l-3.5 -3.5zM348.1 936.3l3.5 3.5l-3.5 3.5l-3.5 -3.5zM351.0 939.0l3.5 3.5l-3.5 3.5l-3.5 -3.5zM353.9 935.4l3.5 3.5l-3.5 3.5l-3.5 -3.5zM356.8 930.9l3.5 3.5l-3.5 3.5l-3.5 -3.5zM359.7 931.8l3.5 3.5l-3.5 3.5l-3.5 -3.5zM362.6 933.6l3.5 3.5l-3.5 3.5l-3.5 -3.5zM365.5 937.2l3.5 3.5l-3.5 3.5l-3.5 -3.5zM368.4 931.8l3.5 3.5l-3.5 3.5l-3.5 -3.5zM371.3 935.4l3.5 3.5l-3.5 3.5l-3.5 -3.5zM374.2 944.3l3.5 3.5l-3.5 3.5l-3.5 -3.5zM377.1 935.4l3.5 3.5l-3.5 3.5l-3.5 -3.5zM380.0 930.0l3.5 3.5l-3.5 3.5l-3.5 -3.5zM382.9 927.3l3.5 3.5l-3.5 3.5l-3.5 -3.5zM385.8 929.1l3.5 3.5l-3.5 3.5l-3.5 -3.5zM388.7 937.2l3.5 3.5l-3.5 3.5l-3.5 -3.5zM391.6 941.7l3.5 3.5l-3.5 3.5l-3.5 -3.5zM394.5 931.8l3.5 3.5l-3.5 3.5l-3.5 -3.5zM397.4 935.4l3.5 3.5l-3.5 3.5l-3.5 -3.5zM400.3 931.8l3.5 3.5l-3.5 3.5l-3.5 -3.5zM403.2 930.0l3.5 3.5l-3.5 3.5l-3.5 -3.5zM406.1 939.9l3.5 3.5l-3.5 3.5l-3.5 -3.5zM409.0 933.6l3.5 3.5l-3.5 3.5l-3.5 -3.5zM411.9 925.5l3.5 3.5l-3.5 3.5l-3.5 -3.5zM414.8 935.4l3.5 3.5l-3.5 3.5l-3.5 -3.5zM417.7 931.8l3.5 3.5l-3.5 3.5l-3.5 -3.5zM420.6 922.8l3.5 3.5l-3.5 3.5l-3.5 -3.5zM423.5 928.2l3.5 3.5l-3.5 3.5l-3.5 -3.5zM426.4 930.0l3.5 3.5l-3.5 3.5l-3.5 -3.5zM429.3 932.7l3.5 3.5l-3.5 3.5l-3.5 -3.5zM432.2 939.0l3.5 3.5l-3.5 3.5l-3.5 -3.5zM435.1 931.8l3.5 3.5l-3.5 3.5l-3.5 -3.5zM438.0 932.7l3.5 3.5l-3.5 3.5l-3.5 -3.5zM440.9 935.4l3.5 3.5l-3.5 3.5l-3.5 -3.5zM443.8 945.2l3.5 3.5l-3.5 3.5l-3.5 -3.5zM446.7 936.3l3.5 3.5l-3.5 3.5l-3.5 -3.5zM449.6 923.7l3.5 3.5l-3.5 3.5l-3.5 -3.5zM452.5 938.1l3.5 3.5l-3.5 3.5l-3.5 -3.5zM455.4 935.4l3.5 3.5l-3.5 3.5l-3.5 -3.5zM458.3 931.8l3.5 3.5l-3.5 3.5l-3.5 -3.5zM461.2 933.6l3.5 3.5l-3.5 3.5l-3.5 -3.5zM464.1 938.1l3.5 3.5l-3.5 3.5l-3.5 -3.5zM467.0 930.9l3.5 3.5l-3.5 3.5l-3.5 -3.5zM469.9 930.0l3.5 3.5l-3.5 3.5l-3.5 -3.5zM472.8 931.8l3.5 3.5l-3.5 3.5l-3.5 -3.5zM475.7 934.5l3.5 3.5l-3.5 3.5l-3.5 -3.5zM478.6 932.7l3.5 3.5l-3.5 3.5l-3.5 -3.5zM481.5 934.5l3.5 3.5l-3.5 3.5l-3.5 -3.5zM484.4 931.8l3.5 3.5l-3.5 3.5l-3.5 -3.5zM487.3 930.0l3.5 3.5l-3.5 3.5l-3.5 -3.5zM490.2 942.5l3.5 3.5l-3.5 3.5l-3.5 -3.5zM493.1 930.0l3.5 3.5l-3.5 3.5l-3.5 -3.5zM496.0 926.4l3.5 3.5l-3.5 3.5l-3.5 -3.5zM498.9 931.8l3.5 3.5l-3.5 3.5l-3.5 -3.5zM501.8 939.9l3.5 3.5l-3.5 3.5l-3.5 -3.5zM504.7 933.6l3.5 3.5l-3.5 3.5l-3.5 -3.5zM507.6 934.5l3.5 3.5l-3.5 3.5l-3.5 -3.5zM510.5 934.5l3.5 3.5l-3.5 3.5l-3.5 -3.5zM513.4 933.6l3.5 3.5l-3.5 3.5l-3.5 -3.5zM516.3 930.0l3.5 3.5l-3.5 3.5l-3.5 -3.5zM519.2 938.1l3.5 3.5l-3.5 3.5l-3.5 -3.5zM522.1 928.2l3.5 3.5l-3.5 3.5l-3.5 -3.5zM525.0 935.4l3.5 3.5l-3.5 3.5l-3.5 -3.5zM527.9 930.0l3.5 3.5l-3.5 3.5l-3.5 -3.5zM530.8 930.0l3.5 3.5l-3.5 3.5l-3.5 -3.5zM533.7 939.9l3.5 3.5l-3.5 3.5l-3.5 -3.5zM536.6 932.7l3.5 3.5l-3.5 3.5l-3.5 -3.5zM539.5 930.0l3.5 3.5l-3.5 3.5l-3.5 -3.5zM542.4 938.1l3.5 3.5l-3.5 3.5l-3.5 -3.5zM545.3 934.5l3.5 3.5l-3.5 3.5l-3.5 -3.5zM548.2 932.7l3.5 3.5l-3.5 3.5l-3.5 -3.5zM551.1 930.0l3.5 3.5l-3.5 3.5l-3.5 -3.5zM554.0 931.8l3.5 3.5l-3.5 3.5l-3.5 -3.5zM556.9 930.0l3.5 3.5l-3.5 3.5l-3.5 -3.5zM559.8 931.8l3.5 3.5l-3.5 3.5l-3.5 -3.5zM562.7 932.7l3.5 3.5l-3.5 3.5l-3.5 -3.5zM565.6 932.7l3.5 3.5l-3.5 3.5l-3.5 -3.5zM568.5 930.0l3.5 3.5l-3.5 3.5l-3.5 -3.5zM571.4 935.4l3.5 3.5l-3.5 3.5l-3.5 -3.5zM574.3 928.2l3.5 3.5l-3.5 3.5l-3.5 -3.5zM577.2 933.6l3.5 3.5l-3.5 3.5l-3.5 -3.5zM580.1 935.4l3.5 3.5l-3.5 3.5l-3.5 -3.5zM583.0 935.4l3.5 3.5l-3.5 3.5l-3.5 -3.5zM585.9 933.6l3.5 3.5l-3.5 3.5l-3.5 -3.5zM588.8 926.4l3.5 3.5l-3.5 3.5l-3.5 -3.5zM591.7 930.0l3.5 3.5l-3.5 3.5l-3.5 -3.5zM594.6 932.7l3.5 3.5l-3.5 3.5l-3.5 -3.5zM597.5 937.2l3.5 3.5l-3.5 3.5l-3.5 -3.5zM600.4 929.1l3.5 3.5l-3.5 3.5l-3.5 -3.5zM603.3 932.7l3.5 3.5l-3.5 3.5l-3.5 -3.5zM606.2 927.3l3.5 3.5l-3.5 3.5l-3.5 -3.5zM609.1 936.3l3.5 3.5l-3.5 3.5l-3.5 -3.5zM612.0 930.0l3.5 3.5l-3.5 3.5l-3.5 -3.5zM614.9 943.5l3.5 3.5l-3.5 3.5l-3.5 -3.5zM617.8 934.5l3.5 3.5l-3.5 3.5l-3.5 -3.5zM620.7 924.6l3.5 3.5l-3.5 3.5l-3.5 -3.5zM623.6 930.0l3.5 3.5l-3.5 3.5l-3.5 -3.5zM626.5 930.9l3.5 3.5l-3.5 3.5l-3.5 -3.5zM629.4 939.9l3.5 3.5l-3.5 3.5l-3.5 -3.5zM632.3 931.8l3.5 3.5l-3.5 3.5l-3.5 -3.5zM635.2 925.5l3.5 3.5l-3.5 3.5l-3.5 -3.5zM638.1 939.9l3.5 3.5l-3.5 3.5l-3.5 -3.5zM641.0 928.2l3.5 3.5l-3.5 3.5l-3.5 -3.5zM643.9 940.8l3.5 3.5l-3.5 3.5l-3.5 -3.5zM646.8 930.9l3.5 3.5l-3.5 3.5l-3.5 -3.5zM649.7 935.4l3.5 3.5l-3.5 3.5l-3.5 -3.5zM652.6 928.2l3.5 3.5l-3.5 3.5l-3.5 -3.5zM655.5 933.6l3.5 3.5l-3.5 3.5l-3.5 -3.5zM658.4 930.0l3.5 3.5l-3.5 3.5l-3.5 -3.5zM661.3 930.9l3.5 3.5l-3.5 3.5l-3.5 -3.5zM664.2 937.2l3.5 3.5l-3.5 3.5l-3.5 -3.5zM667.1 928.2l3.5 3.5l-3.5 3.5l-3.5 -3.5zM670.0 933.6l3.5 3.5l-3.5 3.5l-3.5 -3.5zM672.9 934.5l3.5 3.5l-3.5 3.5l-3.5 -3.5zM675.8 933.6l3.5 3.5l-3.5 3.5l-3.5 -3.5zM678.7 927.3l3.5 3.5l-3.5 3.5l-3.5 -3.5zM681.6 930.0l3.5 3.5l-3.5 3.5l-3.5 -3.5zM684.5 937.2l3.5 3.5l-3.5 3.5l-3.5 -3.5zM687.4 938.1l3.5 3.5l-3.5 3.5l-3.5 -3.5zM690.3 934.5l3.5 3.5l-3.5 3.5l-3.5 -3.5zM693.2 935.4l3.5 3.5l-3.5 3.5l-3.5 -3.5zM696.1 930.9l3.5 3.5l-3.5 3.5l-3.5 -3.5zM699.0 934.5l3.5 3.5l-3.5 3.5l-3.5 -3.5zM701.9 930.9l3.5 3.5l-3.5 3.5l-3.5 -3.5zM704.8 931.8l3.5 3.5l-3.5 3.5l-3.5 -3.5zM707.7 930.0l3.5 3.5l-3.5 3.5l-3.5 -3.5zM710.6 931.8l3.5 3.5l-3.5 3.5l-3.5 -3.5zM713.5 938.1l3.5 3.5l-3.5 3.5l-3.5 -3.5zM716.4 930.0l3.5 3.5l-3.5 3.5l-3.5 -3.5zM719.3 937.2l3.5 3.5l-3.5 3.5l-3.5 -3.5zM722.2 932.7l3.5 3.5l-3.5 3.5l-3.5 -3.5zM725.1 939.9l3.5 3.5l-3.5 3.5l-3.5 -3.5zM728.0 939.9l3.5 3.5l-3.5 3.5l-3.5 -3.5zM730.9 931.8l3.5 3.5l-3.5 3.5l-3.5 -3.5zM733.8 931.8l3.5 3.5l-3.5 3.5l-3.5 -3.5zM736.7 928.2l3.5 3.5l-3.5 3.5l-3.5 -3.5zM739.6 943.5l3.5 3.5l-3.5 3.5l-3.5 -3.5zM742.5 931.8l3.5 3.5l-3.5 3.5l-3.5 -3.5zM745.4 923.7l3.5 3.5l-3.5 3.5l-3.5 -3.5zM748.3 930.9l3.5 3.5l-3.5 3.5l-3.5 -3.5zM751.2 935.4l3.5 3.5l-3.5 3.5l-3.5 -3.5zM754.1 932.7l3.5 3.5l-3.5 3.5l-3.5 -3.5zM757.0 927.3l3.5 3.5l-3.5 3.5l-3.5 -3.5zM759.9 933.6l3.5 3.5l-3.5 3.5l-3.5 -3.5zM762.8 937.2l3.5 3.5l-3.5 3.5l-3.5 -3.5zM765.7 932.7l3.5 3.5l-3.5 3.5l-3.5 -3.5zM768.6 935.4l3.5 3.5l-3.5 3.5l-3.5 -3.5zM771.5 941.7l3.5 3.5l-3.5 3.5l-3.5 -3.5zM774.4 940.8l3.5 3.5l-3.5 3.5l-3.5 -3.5zM777.3 930.9l3.5 3.5l-3.5 3.5l-3.5 -3.5zM780.2 936.3l3.5 3.5l-3.5 3.5l-3.5 -3.5zM783.1 930.0l3.5 3.5l-3.5 3.5l-3.5 -3.5zM786.0 937.2l3.5 3.5l-3.5 3.5l-3.5 -3.5zM788.9 930.0l3.5 3.5l-3.5 3.5l-3.5 -3.5zM791.8 939.9l3.5 3.5l-3.5 3.5l-3.5 -3.5zM794.7 940.8l3.5 3.5l-3.5 3.5l-3.5 -3.5zM797.6 933.6l3.5 3.5l-3.5 3.5l-3.5 -3.5zM800.5 930.9l3.5 3.5l-3.5 3.5l-3.5 -3.5zM803.4 936.3l3.5 3.5l-3.5 3.5l-3.5 -3.5zM806.3 933.6l3.5 3.5l-3.5 3.5l-3.5 -3.5zM809.2 926.4l3.5 3.5l-3.5 3.5l-3.5 -3.5zM812.1 928.2l3.5 3.5l-3.5 3.5l-3.5 -3.5zM815.0 930.0l3.5 3.5l-3.5 3.5l-3.5 -3.5zM817.9 927.3l3.5 3.5l-3.5 3.5l-3.5 -3.5zM820.8 924.6l3.5 3.5l-3.5 3.5l-3.5 -3.5zM823.7 939.0l3.5 3.5l-3.5 3.5l-3.5 -3.5zM826.6 936.3l3.5 3.5l-3.5 3.5l-3.5 -3.5zM829.5 933.6l3.5 3.5l-3.5 3.5l-3.5 -3.5zM832.4 932.7l3.5 3.5l-3.5 3.5l-3.5 -3.5zM835.3 935.4l3.5 3.5l-3.5 3.5l-3.5 -3.5zM838.2 938.1l3.5 3.5l-3.5 3.5l-3.5 -3.5zM841.1 943.5l3.5 3.5l-3.5 3.5l-3.5 -3.5zM844.0 930.0l3.5 3.5l-3.5 3.5l-3.5 -3.5zM846.9 932.7l3.5 3.5l-3.5 3.5l-3.5 -3.5zM849.8 938.1l3.5 3.5l-3.5 3.5l-3.5 -3.5zM852.7 933.6l3.5 3.5l-3.5 3.5l-3.5 -3.5zM855.6 930.0l3.5 3.5l-3.5 3.5l-3.5 -3.5zM858.5 936.3l3.5 3.5l-3.5 3.5l-3.5 -3.5zM861.4 930.0l3.5 3.5l-3.5 3.5l-3.5 -3.5zM864.3 924.6l3.5 3.5l-3.5 3.5l-3.5 -3.5zM867.2 940.8l3.5 3.5l-3.5 3.5l-3.5 -3.5zM870.1 939.0l3.5 3.5l-3.5 3.5l-3.5 -3.5zM873.0 936.3l3.5 3.5l-3.5 3.5l-3.5 -3.5zM875.9 935.4l3.5 3.5l-3.5 3.5l-3.5 -3.5zM878.8 935.4l3.5 3.5l-3.5 3.5l-3.5 -3.5zM881.7 934.5l3.5 3.5l-3.5 3.5l-3.5 -3.5zM884.6 933.6l3.5 3.5l-3.5 3.5l-3.5 -3.5z" fill="#00ff00"/><polyline points="78.5,831.5 81.5,847.5 84.5,847.5 87.5,842.5 90.5,834.5 93.5,854.5 96.5,863.5 99.5,869.5 102.5,838.5 104.5,845.5 107.5,842.5 110.5,837.5 113.5,851.5 116.5,856.5 119.5,834.5 122.5,858.5 125.5,859.5 128.5,834.5 131.5,861.5 134.5,857.5 136.5,854.5 139.5,852.5 142.5,843.5 145.5,860.5 148.5,847.5 151.5,872.5 154.5,847.5 157.5,857.5 160.5,848.5 162.5,852.5 165.5,858.5 168.5,868.5 171.5,869.5 174.5,829.5 177.5,863.5 180.5,834.5 183.5,865.5 186.5,863.5 189.5,871.5 192.5,833.5 194.5,842.5 197.5,852.5 200.5,862.5 203.5,885.5 206.5,864.5 209.5,878.5 212.5,870.5 215.5,853.5 218.5,829.5 220.5,848.5 223.5,862.5 226.5,857.5 229.5,847.5 232.5,859.5 235.5,836.5 238.5,849.5 241.5,865.5 244.5,860.5 247.5,855.5 250.5,861.5 252.5,851.5 255.5,833.5 258.5,847.5 261.5,838.5 264.5,855.5 267.5,853.5 270.5,855.5 273.5,853.5 276.5,843.5 278.5,860.5 281.5,826.5 284.5,846.5 287.5,846.5 290.5,855.5 293.5,844.5 296.5,851.5 299.5,856.5 302.5,854.5 305.5,838.5 308.5,848.5 310.5,833.5 313.5,849.5 316.5,845.5 319.5,845.5 322.5,844.5 325.5,867.5 328.5,855.5 331.5,852.5 334.5,848.5 336.5,868.5 339.5,848.5 342.5,850.5 345.5,837.5 348.5,853.5 351.5,888.5 354.5,840.5 357.5,857.5 360.5,854.5 363.5,843.5 366.5,832.5 368.5,842.5 371.5,844.5 374.5,864.5 377.5,858.5 380.5,853.5 383.5,853.5 386.5,919.5 389.5,856.5 392.5,850.5 394.5,848.5 397.5,869.5 400.5,852.5 403.5,846.5 406.5,870.5 409.5,854.5 412.5,866.5 415.5,847.5 418.5,866.5 421.5,844.5 424.5,852.5 426.5,864.5 429.5,836.5 432.5,851.5 435.5,835.5 438.5,838.5 441.5,848.5 444.5,859.5 447.5,854.5 450.5,864.5 452.5,874.5 455.5,850.5 458.5,851.5 461.5,849.5 464.5,854.5 467.5,846.5 470.5,844.5 473.5,857.5 476.5,851.5 479.5,858.5 482.5,862.5 484.5,915.5 487.5,858.5 490.5,862.5 493.5,858.5 496.5,838.5 499.5,846.5 502.5,851.5 505.5,854.5 508.5,848.5 510.5,833.5 513.5,853.5 516.5,851.5 519.5,837.5 522.5,858.5 525.5,863.5 528.5,851.5 531.5,850.5 534.5,832.5 537.5,851.5 540.5,861.5 542.5,858.5 545.5,857.5 548.5,854.5 551.5,842.5 554.5,848.5 557.5,860.5 560.5,841.5 563.5,867.5 566.5,849.5 568.5,863.5 571.5,852.5 574.5,865.5 577.5,853.5 580.5,853.5 583.5,851.5 586.5,834.5 589.5,859.5 592.5,842.5 595.5,857.5 598.5,850.5 600.5,848.5 603.5,857.5 606.5,851.5 609.5,860.5 612.5,870.5 615.5,838.5 618.5,863.5 621.5,854.5 624.5,866.5 626.5,864.5 629.5,854.5 632.5,844.5 635.5,876.5 638.5,837.5 641.5,861.5 644.5,846.5 647.5,848.5 650.5,863.5 653.5,863.5 656.5,854.5 658.5,841.5 661.5,824.5 664.5,856.5 667.5,861.5 670.5,831.5 673.5,851.5 676.5,848.5 679.5,832.5 682.5,842.5 684.5,844.5 687.5,856.5 690.5,863.5 693.5,844.5 696.5,838.5 699.5,831.5 702.5,839.5 705.5,853.5 708.5,821.5 711.5,840.5 714.5,859.5 716.5,850.5 719.5,841.5 722.5,851.5 725.5,853.5 728.5,866.5 731.5,864.5 734.5,846.5 737.5,866.5 740.5,859.5 742.5,836.5 745.5,833.5 748.5,865.5 751.5,838.5 754.5,848.5 757.5,846.5 760.5,871.5 763.5,856.5 766.5,847.5 769.5,860.5 772.5,855.5 774.5,842.5 777.5,843.5 780.5,878.5 783.5,868.5 786.5,873.5 789.5,845.5 792.5,872.5 795.5,871.5 798.5,852.5 800.5,872.5 803.5,855.5 806.5,842.5 809.5,858.5 812.5,842.5 815.5,851.5 818.5,833.5 821.5,855.5 824.5,858.5 827.5,854.5 830.5,850.5 832.5,866.5 835.5,852.5 838.5,871.5 841.5,848.5 844.5,839.5 847.5,860.5 850.5,838.5 853.5,849.5 856.5,864.5 858.5,848.5 861.5,858.5 864.5,856.5 867.5,873.5 870.5,926.5 873.5,847.5 876.5,845.5 879.5,850.5 882.5,856.5 885.5,849.5" fill="none" stroke="#ff00ff" stroke-width="1" shape-rendering="crispEdges"/><path d="M78.4 827.4l3.5 3.5l-3.5 3.5l-3.5 -3.5zM81.3 843.5l3.5 3.5l-3.5 3.5l-3.5 -3.5zM84.2 843.5l3.5 3.5l-3.5 3.5l-3.5 -3.5zM87.1 838.5l3.5 3.5l-3.5 3.5l-3.5 -3.5zM90.0 831.0l3.5 3.5l-3.5 3.5l-3.5 -3.5zM92.9 850.2l3.5 3.5l-3.5 3.5l-3.5 -3.5zM95.8 859.1l3.5 3.5l-3.5 3.5l-3.5 -3.5zM98.7 865.4l3.5 3.5l-3.5 3.5l-3.5 -3.5zM101.6 834.0l3.5 3.5l-3.5 3.5l-3.5 -3.5zM104.5 841.2l3.5 3.5l-3.5 3.5l-3.5 -3.5zM107.4 838.5l3.5 3.5l-3.5 3.5l-3.5 -3.5zM110.3 833.5l3.5 3.5l-3.5 3.5l-3.5 -3.5zM113.2 847.5l3.5 3.5l-3.5 3.5l-3.5 -3.5zM116.1 852.5l3.5 3.5l-3.5 3.5l-3.5 -3.5zM119.0 831.0l3.5 3.5l-3.5 3.5l-3.5 -3.5zM121.9 855.0l3.5 3.5l-3.5 3.5l-3.5 -3.5zM124.8 855.6l3.5 3.5l-3.5 3.5l-3.5 -3.5zM127.7 831.0l3.5 3.5l-3.5 3.5l-3.5 -3.5zM130.6 857.9l3.5 3.5l-3.5 3.5l-3.5 -3.5zM133.5 853.2l3.5 3.5l-3.5 3.5l-3.5 -3.5zM136.4 850.2l3.5 3.5l-3.5 3.5l-3.5 -3.5zM139.3 848.9l3.5 3.5l-3.5 3.5l-3.5 -3.5zM142.2 839.4l3.5 3.5l-3.5 3.5l-3.5 -3.5zM145.1 856.5l3.5 3.5l-3.5 3.5l-3.5 -3.5zM148.0 843.5l3.5 3.5l-3.5 3.5l-3.5 -3.5zM150.9 868.1l3.5 3.5l-3.5 3.5l-3.5 -3.5zM153.8 843.9l3.5 3.5l-3.5 3.5l-3.5 -3.5zM156.7 853.8l3.5 3.5l-3.5 3.5l-3.5 -3.5zM159.6 844.8l3.5 3.5l-3.5 3.5l-3.5 -3.5zM162.5 848.4l3.5 3.5l-3.5 3.5l-3.5 -3.5zM165.4 854.7l3.5 3.5l-3.5 3.5l-3.5 -3.5zM168.3 864.0l3.5 3.5l-3.5 3.5l-3.5 -3.5zM171.2 865.4l3.5 3.5l-3.5 3.5l-3.5 -3.5zM174.1 825.6l3.5 3.5l-3.5 3.5l-3.5 -3.5zM177.0 859.1l3.5 3.5l-3.5 3.5l-3.5 -3.5zM179.9 830.1l3.5 3.5l-3.5 3.5l-3.5 -3.5zM182.8 861.8l3.5 3.5l-3.5 3.5l-3.5 -3.5zM185.7 859.1l3.5 3.5l-3.5 3.5l-3.5 -3.5zM188.6 867.6l3.5 3.5l-3.5 3.5l-3.5 -3.5zM191.5 829.2l3.5 3.5l-3.5 3.5l-3.5 -3.5zM194.4 838.5l3.5 3.5l-3.5 3.5l-3.5 -3.5zM197.3 848.4l3.5 3.5l-3.5 3.5l-3.5 -3.5zM200.2 858.2l3.5 3.5l-3.5 3.5l-3.5 -3.5zM203.1 881.6l3.5 3.5l-3.5 3.5l-3.5 -3.5zM206.0 860.9l3.5 3.5l-3.5 3.5l-3.5 -3.5zM208.9 874.4l3.5 3.5l-3.5 3.5l-3.5 -3.5zM211.8 866.3l3.5 3.5l-3.5 3.5l-3.5 -3.5zM214.7 849.3l3.5 3.5l-3.5 3.5l-3.5 -3.5zM217.6 825.1l3.5 3.5l-3.5 3.5l-3.5 -3.5zM220.5 844.3l3.5 3.5l-3.5 3.5l-3.5 -3.5zM223.4 858.2l3.5 3.5l-3.5 3.5l-3.5 -3.5zM226.3 853.8l3.5 3.5l-3.5 3.5l-3.5 -3.5zM229.2 843.5l3.5 3.5l-3.5 3.5l-3.5 -3.5zM232.1 855.6l3.5 3.5l-3.5 3.5l-3.5 -3.5zM235.0 832.2l3.5 3.5l-3.5 3.5l-3.5 -3.5zM237.9 845.7l3.5 3.5l-3.5 3.5l-3.5 -3.5zM240.8 861.8l3.5 3.5l-3.5 3.5l-3.5 -3.5zM243.7 856.5l3.5 3.5l-3.5 3.5l-3.5 -3.5zM246.6 851.1l3.5 3.5l-3.5 3.5l-3.5 -3.5zM249.5 857.9l3.5 3.5l-3.5 3.5l-3.5 -3.5zM252.4 847.5l3.5 3.5l-3.5 3.5l-3.5 -3.5zM255.3 829.2l3.5 3.5l-3.5 3.5l-3.5 -3.5zM258.2 843.5l3.5 3.5l-3.5 3.5l-3.5 -3.5zM261.1 834.0l3.5 3.5l-3.5 3.5l-3.5 -3.5zM264.0 851.4l3.5 3.5l-3.5 3.5l-3.5 -3.5zM266.9 849.3l3.5 3.5l-3.5 3.5l-3.5 -3.5zM269.8 851.4l3.5 3.5l-3.5 3.5l-3.5 -3.5zM272.7 849.3l3.5 3.5l-3.5 3.5l-3.5 -3.5zM275.6 839.4l3.5 3.5l-3.5 3.5l-3.5 -3.5zM278.5 856.5l3.5 3.5l-3.5 3.5l-3.5 -3.5zM281.4 822.4l3.5 3.5l-3.5 3.5l-3.5 -3.5zM284.3 842.5l3.5 3.5l-3.5 3.5l-3.5 -3.5zM287.2 842.5l3.5 3.5l-3.5 3.5l-3.5 -3.5zM290.1 851.4l3.5 3.5l-3.5 3.5l-3.5 -3.5zM293.0 840.3l3.5 3.5l-3.5 3.5l-3.5 -3.5zM295.9 847.5l3.5 3.5l-3.5 3.5l-3.5 -3.5zM298.8 852.0l3.5 3.5l-3.5 3.5l-3.5 -3.5zM301.7 850.7l3.5 3.5l-3.5 3.5l-3.5 -3.5zM304.6 834.0l3.5 3.5l-3.5 3.5l-3.5 -3.5zM307.5 844.3l3.5 3.5l-3.5 3.5l-3.5 -3.5zM310.4 829.5l3.5 3.5l-3.5 3.5l-3.5 -3.5zM313.3 845.3l3.5 3.5l-3.5 3.5l-3.5 -3.5zM316.2 841.2l3.5 3.5l-3.5 3.5l-3.5 -3.5zM319.1 841.2l3.5 3.5l-3.5 3.5l-3.5 -3.5zM322.0 840.0l3.5 3.5l-3.5 3.5l-3.5 -3.5zM324.9 863.6l3.5 3.5l-3.5 3.5l-3.5 -3.5zM327.8 851.1l3.5 3.5l-3.5 3.5l-3.5 -3.5zM330.7 848.4l3.5 3.5l-3.5 3.5l-3.5 -3.5zM333.6 844.3l3.5 3.5l-3.5 3.5l-3.5 -3.5zM336.5 864.5l3.5 3.5l-3.5 3.5l-3.5 -3.5zM339.4 844.8l3.5 3.5l-3.5 3.5l-3.5 -3.5zM342.3 846.6l3.5 3.5l-3.5 3.5l-3.5 -3.5zM345.2 833.5l3.5 3.5l-3.5 3.5l-3.5 -3.5zM348.1 849.3l3.5 3.5l-3.5 3.5l-3.5 -3.5zM351.0 884.3l3.5 3.5l-3.5 3.5l-3.5 -3.5zM353.9 836.4l3.5 3.5l-3.5 3.5l-3.5 -3.5zM356.8 853.2l3.5 3.5l-3.5 3.5l-3.5 -3.5zM359.7 850.2l3.5 3.5l-3.5 3.5l-3.5 -3.5zM362.6 839.4l3.5 3.5l-3.5 3.5l-3.5 -3.5zM365.5 828.1l3.5 3.5l-3.5 3.5l-3.5 -3.5zM368.4 838.5l3.5 3.5l-3.5 3.5l-3.5 -3.5zM371.3 840.8l3.5 3.5l-3.5 3.5l-3.5 -3.5zM374.2 860.4l3.5 3.5l-3.5 3.5l-3.5 -3.5zM377.1 854.3l3.5 3.5l-3.5 3.5l-3.5 -3.5zM380.0 849.3l3.5 3.5l-3.5 3.5l-3.5 -3.5zM382.9 849.3l3.5 3.5l-3.5 3.5l-3.5 -3.5zM385.8 915.3l3.5 3.5l-3.5 3.5l-3.5 -3.5zM388.7 852.5l3.5 3.5l-3.5 3.5l-3.5 -3.5zM391.6 846.1l3.5 3.5l-3.5 3.5l-3.5 -3.5zM394.5 844.3l3.5 3.5l-3.5 3.5l-3.5 -3.5zM397.4 865.4l3.5 3.5l-3.5 3.5l-3.5 -3.5zM400.3 848.9l3.5 3.5l-3.5 3.5l-3.5 -3.5zM403.2 842.1l3.5 3.5l-3.5 3.5l-3.5 -3.5zM406.1 866.9l3.5 3.5l-3.5 3.5l-3.5 -3.5zM409.0 850.2l3.5 3.5l-3.5 3.5l-3.5 -3.5zM411.9 862.2l3.5 3.5l-3.5 3.5l-3.5 -3.5zM414.8 843.5l3.5 3.5l-3.5 3.5l-3.5 -3.5zM417.7 862.7l3.5 3.5l-3.5 3.5l-3.5 -3.5zM420.6 840.0l3.5 3.5l-3.5 3.5l-3.5 -3.5zM423.5 848.4l3.5 3.5l-3.5 3.5l-3.5 -3.5zM426.4 860.0l3.5 3.5l-3.5 3.5l-3.5 -3.5zM429.3 832.2l3.5 3.5l-3.5 3.5l-3.5 -3.5zM432.2 847.8l3.5 3.5l-3.5 3.5l-3.5 -3.5zM435.1 831.3l3.5 3.5l-3.5 3.5l-3.5 -3.5zM438.0 834.9l3.5 3.5l-3.5 3.5l-3.5 -3.5zM440.9 844.3l3.5 3.5l-3.5 3.5l-3.5 -3.5zM443.8 855.6l3.5 3.5l-3.5 3.5l-3.5 -3.5zM446.7 850.7l3.5 3.5l-3.5 3.5l-3.5 -3.5zM449.6 860.0l3.5 3.5l-3.5 3.5l-3.5 -3.5zM452.5 870.4l3.5 3.5l-3.5 3.5l-3.5 -3.5zM455.4 846.6l3.5 3.5l-3.5 3.5l-3.5 -3.5zM458.3 847.1l3.5 3.5l-3.5 3.5l-3.5 -3.5zM461.2 845.7l3.5 3.5l-3.5 3.5l-3.5 -3.5zM464.1 850.7l3.5 3.5l-3.5 3.5l-3.5 -3.5zM467.0 843.0l3.5 3.5l-3.5 3.5l-3.5 -3.5zM469.9 840.0l3.5 3.5l-3.5 3.5l-3.5 -3.5zM472.8 853.8l3.5 3.5l-3.5 3.5l-3.5 -3.5zM475.7 847.5l3.5 3.5l-3.5 3.5l-3.5 -3.5zM478.6 854.3l3.5 3.5l-3.5 3.5l-3.5 -3.5zM481.5 858.2l3.5 3.5l-3.5 3.5l-3.5 -3.5zM484.4 911.5l3.5 3.5l-3.5 3.5l-3.5 -3.5zM487.3 855.0l3.5 3.5l-3.5 3.5l-3.5 -3.5zM490.2 858.2l3.5 3.5l-3.5 3.5l-3.5 -3.5zM493.1 854.3l3.5 3.5l-3.5 3.5l-3.5 -3.5zM496.0 834.0l3.5 3.5l-3.5 3.5l-3.5 -3.5zM498.9 843.0l3.5 3.5l-3.5 3.5l-3.5 -3.5zM501.8 847.5l3.5 3.5l-3.5 3.5l-3.5 -3.5zM504.7 850.7l3.5 3.5l-3.5 3.5l-3.5 -3.5zM507.6 844.8l3.5 3.5l-3.5 3.5l-3.5 -3.5zM510.5 829.5l3.5 3.5l-3.5 3.5l-3.5 -3.5zM513.4 849.6l3.5 3.5l-3.5 3.5l-3.5 -3.5zM516.3 847.8l3.5 3.5l-3.5 3.5l-3.5 -3.5zM519.2 833.1l3.5 3.5l-3.5 3.5l-3.5 -3.5zM522.1 854.3l3.5 3.5l-3.5 3.5l-3.5 -3.5zM525.0 859.7l3.5 3.5l-3.5 3.5l-3.5 -3.5zM527.9 847.1l3.5 3.5l-3.5 3.5l-3.5 -3.5zM530.8 846.6l3.5 3.5l-3.5 3.5l-3.5 -3.5zM533.7 828.7l3.5 3.5l-3.5 3.5l-3.5 -3.5zM536.6 847.5l3.5 3.5l-3.5 3.5l-3.5 -3.5zM539.5 857.4l3.5 3.5l-3.5 3.5l-3.5 -3.5zM542.4 854.7l3.5 3.5l-3.5 3.5l-3.5 -3.5zM545.3 853.2l3.5 3.5l-3.5 3.5l-3.5 -3.5zM548.2 850.7l3.5 3.5l-3.5 3.5l-3.5 -3.5zM551.1 838.5l3.5 3.5l-3.5 3.5l-3.5 -3.5zM554.0 844.8l3.5 3.5l-3.5 3.5l-3.5 -3.5zM556.9 856.5l3.5 3.5l-3.5 3.5l-3.5 -3.5zM559.8 837.3l3.5 3.5l-3.5 3.5l-3.5 -3.5zM562.7 863.6l3.5 3.5l-3.5 3.5l-3.5 -3.5zM565.6 845.7l3.5 3.5l-3.5 3.5l-3.5 -3.5zM568.5 859.7l3.5 3.5l-3.5 3.5l-3.5 -3.5zM571.4 848.4l3.5 3.5l-3.5 3.5l-3.5 -3.5zM574.3 861.8l3.5 3.5l-3.5 3.5l-3.5 -3.5zM577.2 849.3l3.5 3.5l-3.5 3.5l-3.5 -3.5zM580.1 849.6l3.5 3.5l-3.5 3.5l-3.5 -3.5zM583.0 847.5l3.5 3.5l-3.5 3.5l-3.5 -3.5zM585.9 830.1l3.5 3.5l-3.5 3.5l-3.5 -3.5zM588.8 855.6l3.5 3.5l-3.5 3.5l-3.5 -3.5zM591.7 838.5l3.5 3.5l-3.5 3.5l-3.5 -3.5zM594.6 853.8l3.5 3.5l-3.5 3.5l-3.5 -3.5zM597.5 846.6l3.5 3.5l-3.5 3.5l-3.5 -3.5zM600.4 844.3l3.5 3.5l-3.5 3.5l-3.5 -3.5zM603.3 853.8l3.5 3.5l-3.5 3.5l-3.5 -3.5zM606.2 847.5l3.5 3.5l-3.5 3.5l-3.5 -3.5zM609.1 856.1l3.5 3.5l-3.5 3.5l-3.5 -3.5zM612.0 866.9l3.5 3.5l-3.5 3.5l-3.5 -3.5zM614.9 834.6l3.5 3.5l-3.5 3.5l-3.5 -3.5zM617.8 859.1l3.5 3.5l-3.5 3.5l-3.5 -3.5zM620.7 850.2l3.5 3.5l-3.5 3.5l-3.5 -3.5zM623.6 862.7l3.5 3.5l-3.5 3.5l-3.5 -3.5zM626.5 860.4l3.5 3.5l-3.5 3.5l-3.5 -3.5zM629.4 850.2l3.5 3.5l-3.5 3.5l-3.5 -3.5zM632.3 840.0l3.5 3.5l-3.5 3.5l-3.5 -3.5zM635.2 872.2l3.5 3.5l-3.5 3.5l-3.5 -3.5zM638.1 833.5l3.5 3.5l-3.5 3.5l-3.5 -3.5zM641.0 857.9l3.5 3.5l-3.5 3.5l-3.5 -3.5zM643.9 842.5l3.5 3.5l-3.5 3.5l-3.5 -3.5zM646.8 844.3l3.5 3.5l-3.5 3.5l-3.5 -3.5zM649.7 859.7l3.5 3.5l-3.5 3.5l-3.5 -3.5zM652.6 859.1l3.5 3.5l-3.5 3.5l-3.5 -3.5zM655.5 850.2l3.5 3.5l-3.5 3.5l-3.5 -3.5zM658.4 837.3l3.5 3.5l-3.5 3.5l-3.5 -3.5zM661.3 820.9l3.5 3.5l-3.5 3.5l-3.5 -3.5zM664.2 852.5l3.5 3.5l-3.5 3.5l-3.5 -3.5zM667.1 857.9l3.5 3.5l-3.5 3.5l-3.5 -3.5zM670.0 827.4l3.5 3.5l-3.5 3.5l-3.5 -3.5zM672.9 847.5l3.5 3.5l-3.5 3.5l-3.5 -3.5zM675.8 844.3l3.5 3.5l-3.5 3.5l-3.5 -3.5zM678.7 828.1l3.5 3.5l-3.5 3.5l-3.5 -3.5zM681.6 838.5l3.5 3.5l-3.5 3.5l-3.5 -3.5zM684.5 840.3l3.5 3.5l-3.5 3.5l-3.5 -3.5zM687.4 852.9l3.5 3.5l-3.5 3.5l-3.5 -3.5zM690.3 859.7l3.5 3.5l-3.5 3.5l-3.5 -3.5zM693.2 840.3l3.5 3.5l-3.5 3.5l-3.5 -3.5zM696.1 834.9l3.5 3.5l-3.5 3.5l-3.5 -3.5zM699.0 827.4l3.5 3.5l-3.5 3.5l-3.5 -3.5zM701.9 835.3l3.5 3.5l-3.5 3.5l-3.5 -3.5zM704.8 849.6l3.5 3.5l-3.5 3.5l-3.5 -3.5zM707.7 817.4l3.5 3.5l-3.5 3.5l-3.5 -3.5zM710.6 836.4l3.5 3.5l-3.5 3.5l-3.5 -3.5zM713.5 855.6l3.5 3.5l-3.5 3.5l-3.5 -3.5zM716.4 846.6l3.5 3.5l-3.5 3.5l-3.5 -3.5zM719.3 837.1l3.5 3.5l-3.5 3.5l-3.5 -3.5zM722.2 847.8l3.5 3.5l-3.5 3.5l-3.5 -3.5zM725.1 849.6l3.5 3.5l-3.5 3.5l-3.5 -3.5zM728.0 862.7l3.5 3.5l-3.5 3.5l-3.5 -3.5zM730.9 860.0l3.5 3.5l-3.5 3.5l-3.5 -3.5zM733.8 842.1l3.5 3.5l-3.5 3.5l-3.5 -3.5zM736.7 862.7l3.5 3.5l-3.5 3.5l-3.5 -3.5zM739.6 855.6l3.5 3.5l-3.5 3.5l-3.5 -3.5zM742.5 832.2l3.5 3.5l-3.5 3.5l-3.5 -3.5zM745.4 829.5l3.5 3.5l-3.5 3.5l-3.5 -3.5zM748.3 861.5l3.5 3.5l-3.5 3.5l-3.5 -3.5zM751.2 834.0l3.5 3.5l-3.5 3.5l-3.5 -3.5zM754.1 844.8l3.5 3.5l-3.5 3.5l-3.5 -3.5zM757.0 842.5l3.5 3.5l-3.5 3.5l-3.5 -3.5zM759.9 867.6l3.5 3.5l-3.5 3.5l-3.5 -3.5zM762.8 852.9l3.5 3.5l-3.5 3.5l-3.5 -3.5zM765.7 843.5l3.5 3.5l-3.5 3.5l-3.5 -3.5zM768.6 856.5l3.5 3.5l-3.5 3.5l-3.5 -3.5zM771.5 851.1l3.5 3.5l-3.5 3.5l-3.5 -3.5zM774.4 838.9l3.5 3.5l-3.5 3.5l-3.5 -3.5zM777.3 839.4l3.5 3.5l-3.5 3.5l-3.5 -3.5zM780.2 874.4l3.5 3.5l-3.5 3.5l-3.5 -3.5zM783.1 864.0l3.5 3.5l-3.5 3.5l-3.5 -3.5zM786.0 869.4l3.5 3.5l-3.5 3.5l-3.5 -3.5zM788.9 841.2l3.5 3.5l-3.5 3.5l-3.5 -3.5zM791.8 868.1l3.5 3.5l-3.5 3.5l-3.5 -3.5zM794.7 867.2l3.5 3.5l-3.5 3.5l-3.5 -3.5zM797.6 848.9l3.5 3.5l-3.5 3.5l-3.5 -3.5zM800.5 868.7l3.5 3.5l-3.5 3.5l-3.5 -3.5zM803.4 851.4l3.5 3.5l-3.5 3.5l-3.5 -3.5zM806.3 838.2l3.5 3.5l-3.5 3.5l-3.5 -3.5zM809.2 854.3l3.5 3.5l-3.5 3.5l-3.5 -3.5zM812.1 838.5l3.5 3.5l-3.5 3.5l-3.5 -3.5zM815.0 847.5l3.5 3.5l-3.5 3.5l-3.5 -3.5zM817.9 829.9l3.5 3.5l-3.5 3.5l-3.5 -3.5zM820.8 851.4l3.5 3.5l-3.5 3.5l-3.5 -3.5zM823.7 854.3l3.5 3.5l-3.5 3.5l-3.5 -3.5zM826.6 850.2l3.5 3.5l-3.5 3.5l-3.5 -3.5zM829.5 846.6l3.5 3.5l-3.5 3.5l-3.5 -3.5zM832.4 862.2l3.5 3.5l-3.5 3.5l-3.5 -3.5zM835.3 848.4l3.5 3.5l-3.5 3.5l-3.5 -3.5zM838.2 867.6l3.5 3.5l-3.5 3.5l-3.5 -3.5zM841.1 844.3l3.5 3.5l-3.5 3.5l-3.5 -3.5zM844.0 835.8l3.5 3.5l-3.5 3.5l-3.5 -3.5zM846.9 856.5l3.5 3.5l-3.5 3.5l-3.5 -3.5zM849.8 834.0l3.5 3.5l-3.5 3.5l-3.5 -3.5zM852.7 845.3l3.5 3.5l-3.5 3.5l-3.5 -3.5zM855.6 860.4l3.5 3.5l-3.5 3.5l-3.5 -3.5zM858.5 844.3l3.5 3.5l-3.5 3.5l-3.5 -3.5zM861.4 854.3l3.5 3.5l-3.5 3.5l-3.5 -3.5zM864.3 852.5l3.5 3.5l-3.5 3.5l-3.5 -3.5zM867.2 869.4l3.5 3.5l-3.5 3.5l-3.5 -3.5zM870.1 922.5l3.5 3.5l-3.5 3.5l-3.5 -3.5zM873.0 843.9l3.5 3.5l-3.5 3.5l-3.5 -3.5zM875.9 841.2l3.5 3.5l-3.5 3.5l-3.5 -3.5zM878.8 846.6l3.5 3.5l-3.5 3.5l-3.5 -3.5zM881.7 852.5l3.5 3.5l-3.5 3.5l-3.5 -3.5zM884.6 845.3l3.5 3.5l-3.5 3.5l-3.5 -3.5z" fill="#ff00ff"/><path d="M479.7 933.8h3.6l2.4 2.4v3.6l-2.4 2.4h-3.6l-2.4 -2.4v-3.6z" fill="#ff0000"/><path d="M479.7 857.5h3.6l2.4 2.4v3.6l-2.4 2.4h-3.6l-2.4 -2.4v-3.6z" fill="#ff0000"/><path d="M479.7 728.4h3.6l2.4 2.4v3.6l-2.4 2.4h-3.6l-2.4 -2.4v-3.6z" fill="#ff0000"/><path d="M479.7 622.5h3.6l2.4 2.4v3.6l-2.4 2.4h-3.6l-2.4 -2.4v-3.6z" fill="#ff0000"/></g></svg>
<div class="a btn" style="left:7px;top:971px;width:173px;height:34px"></div>
<div class="a btn" style="left:182px;top:970px;width:119px;height:35px"></div>
<div class="a bold" style="left:10px;top:974px;font-size:20px;line-height:24px;transform:scaleX(0.97);transform-origin:0 0">Copy to Clipboard</div>
<div class="a bold" style="left:190px;top:974px;font-size:20px;line-height:24px;transform:scaleX(0.97);transform-origin:0 0">Save to file</div>
<div class="a" style="left:306px;top:969px;width:540px;height:34px;background:#008080"></div>
<div class="a" style="left:375px;top:972px;width:190px;height:28px;background:#f0f0f0"></div>
<div class="a" style="left:577px;top:972px;width:180px;height:28px;background:#f0f0f0"></div>
<div class="a" style="left:407px;top:982px;width:21px;height:8px;background:#777;border-radius:2px"></div>
<div class="a" style="left:657px;top:982px;width:21px;height:8px;background:#777;border-radius:2px"></div>
<div class="a bold" style="left:315px;top:976px;font-size:18px;line-height:22px;color:#fff;transform:scaleX(1.03);transform-origin:0 0">Zoom</div>
<div class="a bold" style="left:767px;top:976px;font-size:18px;line-height:22px;color:#fff;transform:scaleX(1.0);transform-origin:0 0">Position</div>
<div class="a btn" style="left:855.5px;top:976px;width:28px;height:13px;border-radius:4px"></div>
<div class="a btn" style="left:855.5px;top:992px;width:28px;height:14px;border-radius:4px"></div>
<div class="a btn" style="left:886.5px;top:974px;width:28.5px;height:15px;border-radius:4px"></div>
<div class="a btn" style="left:886.5px;top:992px;width:28.5px;height:14px;border-radius:4px"></div>
<svg class="a" style="left:0;top:0" width="932" height="1003"><path d="M863 986 L869.6 979 L876.2 986 Z" fill="#000"/><path d="M863 994.8 L869.6 1002 L876.2 994.8 Z" fill="#000"/><path d="M892.9 985 L900.5 976.8 L908.1 985 Z" fill="#000"/><path d="M892.9 994.8 L900.5 1003.2 L908.1 994.8 Z" fill="#000"/></svg></body></html>
